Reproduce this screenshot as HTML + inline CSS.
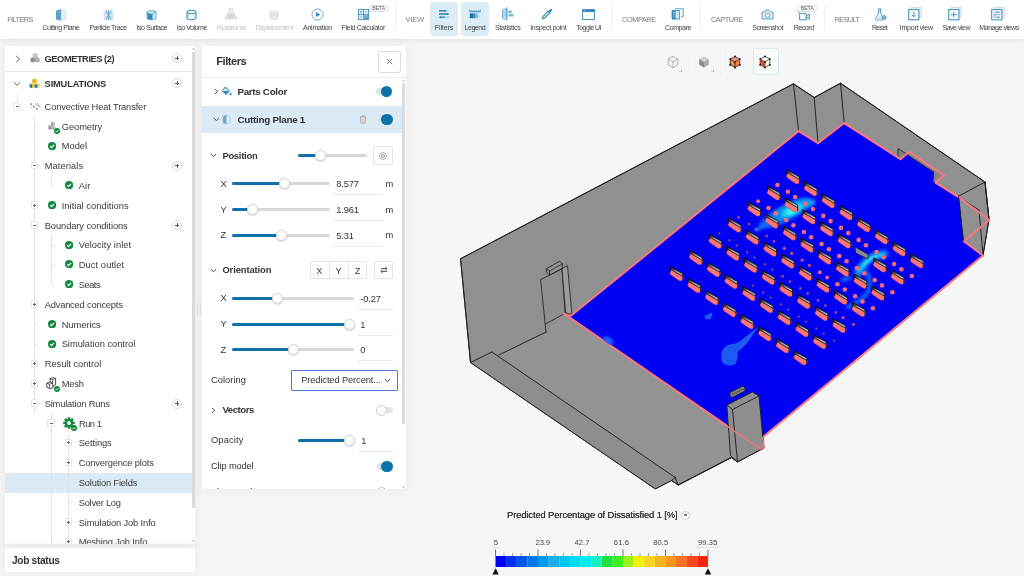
<!DOCTYPE html>
<html>
<head>
<meta charset="utf-8">
<title>SimScale</title>
<style>
*{box-sizing:border-box;margin:0;padding:0}
html,body{width:1024px;height:576px;overflow:hidden;background:#f6f6f6;font-family:"Liberation Sans",sans-serif;color:#3c3c3c}
.abs{position:absolute}
#toolbar{position:absolute;left:0;top:0;width:1024px;height:39.8px;background:#fff;border-bottom:1px solid #e8e8e8;box-shadow:0 1px 4px rgba(0,0,0,.06)}
#viewport{position:absolute;left:411px;top:39px;width:613px;height:537px}
#tree{position:absolute;left:5px;top:45.5px;width:186.5px;height:498.7px;background:#fff;overflow:hidden}
#treesh{position:absolute;left:5px;top:45.5px;width:190.3px;height:498.7px;background:#fff;box-shadow:0 0 11px 2px rgba(0,0,0,.045)}
#tsb{position:absolute;left:191.5px;top:45.5px;width:3.8px;height:498.7px;background:#fff}
#job{position:absolute;left:5px;top:548.2px;width:190.3px;height:23.8px;background:#fff;box-shadow:0 0 11px 2px rgba(0,0,0,.045)}
#filters{position:absolute;left:202px;top:45.5px;width:204.3px;height:443.2px;background:#fff;overflow:hidden}
#filsh{position:absolute;left:202px;top:45.5px;width:204.3px;height:443.2px;box-shadow:0 0 11px 2px rgba(0,0,0,.045)}
.t{position:absolute;white-space:nowrap;line-height:1;opacity:.999}
</style>
</head>
<body>
<div id="viewport">
<svg class="abs" style="left:-411px;top:-39px" width="1024" height="576" viewBox="0 0 1024 576">
<defs><filter id="bl" x="-50%" y="-50%" width="200%" height="200%"><feGaussianBlur stdDeviation="1.6"/></filter><filter id="bl3" x="-50%" y="-50%" width="200%" height="200%"><feGaussianBlur stdDeviation="0.5"/></filter><filter id="bl2" x="-50%" y="-50%" width="200%" height="200%"><feGaussianBlur stdDeviation="0.8"/></filter><linearGradient id="bg" x1="0" y1="0" x2="0.35" y2="1"><stop offset="0.15" stop-color="#1c1c1c"/><stop offset="0.55" stop-color="#9a9a9a"/><stop offset="1" stop-color="#b4b4b4"/></linearGradient><clipPath id="cp"><polygon points="564.0,313.6 567.5,316.8 571.5,315.3 798.5,131.1 818.0,143.2 844.2,123.0 900.5,159.2 906.5,154.3 933.5,172.0 933.5,181.0 935.5,182.5 958.5,197.0 963.6,241.2 983.0,255.5 762.6,437.3 763.7,447.4 761.0,449.2"/></clipPath></defs>
<polygon points="460.5,258.8 793.5,83.8 814.2,97.5 840.5,83.2 985.0,182.0 989.0,219.5 983.0,255.5 762.6,437.3 763.8,448.0 737.5,461.8 731.3,457.6 678.2,485.0 671.5,480.5 655.3,488.9 470.5,362.5" fill="#909090" stroke="#1a1a1a" stroke-width="0.9" stroke-linejoin="round"/>
<polygon points="498.8,355.0 546.2,332.0 564.0,314.0 763.8,448.0 737.5,461.8 731.3,457.6 678.2,485.0 675.2,477.5" fill="#939393"/>
<polygon points="470.5,362.5 492.0,352.0 675.2,477.5 671.5,480.5 655.3,488.9" fill="#8e8e8e"/>
<polygon points="460.5,258.8 793.5,83.8 814.2,97.5 840.5,83.2 985.0,182.0 989.0,219.5 983.0,255.5 762.6,437.3 763.8,448.0 737.5,461.8 731.3,457.6 678.2,485.0 671.5,480.5 655.3,488.9 470.5,362.5" fill="none" stroke="#1a1a1a" stroke-width="0.9" stroke-linejoin="round"/>
<line x1="470.5" y1="362.5" x2="492.0" y2="352.0" stroke="#1a1a1a" stroke-width="0.90" stroke-linecap="round"/>
<line x1="492.0" y1="352.0" x2="675.2" y2="477.5" stroke="#1a1a1a" stroke-width="0.90" stroke-linecap="round"/>
<line x1="675.2" y1="477.5" x2="678.2" y2="485.0" stroke="#1a1a1a" stroke-width="0.90" stroke-linecap="round"/>
<line x1="671.5" y1="480.5" x2="675.2" y2="477.5" stroke="#1a1a1a" stroke-width="0.90" stroke-linecap="round"/>
<line x1="498.8" y1="355.0" x2="546.2" y2="332.0" stroke="#1a1a1a" stroke-width="0.90" stroke-linecap="round"/>
<line x1="678.2" y1="485.0" x2="731.0" y2="457.5" stroke="#1a1a1a" stroke-width="0.90" stroke-linecap="round"/>
<line x1="793.5" y1="83.8" x2="798.5" y2="131.0" stroke="#1a1a1a" stroke-width="0.90" stroke-linecap="round"/>
<line x1="814.2" y1="97.5" x2="818.0" y2="143.0" stroke="#1a1a1a" stroke-width="0.90" stroke-linecap="round"/>
<line x1="840.5" y1="83.2" x2="844.2" y2="123.0" stroke="#1a1a1a" stroke-width="0.90" stroke-linecap="round"/>
<line x1="985.0" y1="182.0" x2="958.5" y2="196.2" stroke="#1a1a1a" stroke-width="0.90" stroke-linecap="round"/>
<line x1="958.5" y1="196.2" x2="963.0" y2="240.0" stroke="#1a1a1a" stroke-width="0.90" stroke-linecap="round"/>
<line x1="985.0" y1="182.0" x2="989.0" y2="219.5" stroke="#1a1a1a" stroke-width="0.90" stroke-linecap="round"/>
<line x1="979.0" y1="210.0" x2="983.0" y2="255.0" stroke="#1a1a1a" stroke-width="0.90" stroke-linecap="round"/>
<line x1="958.5" y1="197.0" x2="979.0" y2="210.0" stroke="#1a1a1a" stroke-width="0.90" stroke-linecap="round"/>
<polygon points="540.6,279.7 562.0,268.8 565.2,313.3 545.2,324.2" fill="#8e8e8e" stroke="#1a1a1a" stroke-width="0.8" stroke-linejoin="round"/>
<line x1="545.2" y1="324.2" x2="546.0" y2="332.0" stroke="#1a1a1a" stroke-width="0.80" stroke-linecap="round"/>
<polygon points="562.0,268.8 567.5,265.6 571.9,314.8 565.6,312.5" fill="#9c9c9c" stroke="#1a1a1a" stroke-width="0.8" stroke-linejoin="round"/>
<polygon points="546.4,268.8 559.7,261.2 562.3,264.0 562.3,268.3 549.5,275.0 546.4,271.9" fill="#949494" stroke="#1a1a1a" stroke-width="0.8" stroke-linejoin="round"/>
<line x1="549.5" y1="271.0" x2="562.3" y2="264.0" stroke="#1a1a1a" stroke-width="0.70" stroke-linecap="round"/>
<line x1="549.5" y1="271.0" x2="549.5" y2="275.0" stroke="#1a1a1a" stroke-width="0.70" stroke-linecap="round"/>
<line x1="546.4" y1="268.8" x2="549.5" y2="271.0" stroke="#1a1a1a" stroke-width="0.70" stroke-linecap="round"/>
<polygon points="898.0,148.5 933.0,171.0 933.0,182.0 898.0,158.0" fill="#7f7f7f" stroke="#1a1a1a" stroke-width="0.8" stroke-linejoin="round"/>
<polygon points="564.0,313.6 567.5,316.8 571.5,315.3 798.5,131.1 818.0,143.2 844.2,123.0 900.5,159.2 906.5,154.3 933.5,172.0 933.5,181.0 935.5,182.5 958.5,197.0 963.6,241.2 983.0,255.5 762.6,437.3 763.7,447.4 761.0,449.2" fill="#0000f5"/>
<polygon points="909.2,151.8 944.2,175.5 935.5,182.5 933.5,181.0 933.5,172.0 906.5,154.3" fill="#868686"/>
<line x1="906.5" y1="154.3" x2="933.5" y2="172.0" stroke="#1a1a1a" stroke-width="0.80" stroke-linecap="round"/>
<line x1="933.5" y1="172.0" x2="933.5" y2="179.0" stroke="#1a1a1a" stroke-width="0.80" stroke-linecap="round"/>
<polygon points="564.0,313.6 567.5,316.8 571.5,315.3 798.5,131.1 818.0,143.2 844.2,123.0 900.5,159.2 909.2,151.8 944.2,175.5 935.5,182.5 958.5,197.0 989.2,220.0 963.8,241.2 983.0,255.5 762.6,437.3 763.7,447.4 761.0,449.2" fill="none" stroke="#f8787e" stroke-width="2.1" stroke-linejoin="round"/>
<line x1="958.5" y1="196.2" x2="963.3" y2="240.5" stroke="#1a1a1a" stroke-width="0.90" stroke-linecap="round"/>
<g clip-path="url(#cp)">
<g filter="url(#bl)">



<ellipse cx="608" cy="341" rx="6" ry="4" fill="#2060ff" transform="rotate(30 608 341)"/>
</g><g filter="url(#bl3)">
<path d="M758.5 326.5L745 337Q739 342.5 734 344Q726.5 343 722.5 350Q719.5 357 723 363.5Q729 367.5 735.5 364Q738.5 357 737.5 352Q744 347.5 750.5 338.5Z" fill="#1a5af2"/>
<path d="M704 316.5L711.5 312.5L712.5 315L710 319.5L706 319Z" fill="#1a5af2"/>
</g><g filter="url(#bl)">
<ellipse cx="786" cy="213" rx="30" ry="8.5" fill="#0c58f2" transform="rotate(-27 786 213)"/>
<ellipse cx="791" cy="209.5" rx="21" ry="7" fill="#0e90f6" transform="rotate(-27 791 209.5)"/>
<ellipse cx="808" cy="204" rx="8" ry="3.5" fill="#10a0f8" transform="rotate(-20 808 204)"/>
<path d="M776 219Q764 226 756 230" stroke="#0e78f4" stroke-width="3.5" fill="none" stroke-linecap="round"/>
</g><g filter="url(#bl2)">
<ellipse cx="792.5" cy="210" rx="12" ry="5" fill="#18d0f4" transform="rotate(-27 792.5 210)"/>
<ellipse cx="793" cy="210" rx="7" ry="3" fill="#40f4ec" transform="rotate(-27 793 210)"/>
</g><g filter="url(#bl)">
<path d="M884 254Q870 256 864 264Q860 269 858 273" stroke="#0e70f4" stroke-width="9" fill="none" stroke-linecap="round"/>
<path d="M865 270Q873 281 868 292Q862 301 848 307" stroke="#0e60f2" stroke-width="4.5" fill="none" stroke-linecap="round"/>
<ellipse cx="846" cy="279" rx="6" ry="2.5" fill="#0e60f2" transform="rotate(-15 846 279)"/>
</g><g filter="url(#bl2)">
<path d="M883 254.5Q870 256.5 864.5 264Q861 268 859 271" stroke="#18c8f8" stroke-width="3.6" fill="none" stroke-linecap="round"/>
<path d="M876 256Q868 259 864 265" stroke="#48f0f0" stroke-width="1.6" fill="none" stroke-linecap="round"/>
</g>
<circle cx="777.5" cy="185.0" r="2.30" fill="#f26a72"/>
<circle cx="787.9" cy="191.8" r="2.30" fill="#f26a72"/>
<circle cx="795.2" cy="197.0" r="2.30" fill="#f26a72"/>
<circle cx="805.6" cy="203.8" r="2.30" fill="#f26a72"/>
<circle cx="812.9" cy="209.1" r="2.30" fill="#f26a72"/>
<circle cx="823.3" cy="215.9" r="2.30" fill="#f26a72"/>
<circle cx="830.6" cy="221.1" r="2.30" fill="#f26a72"/>
<circle cx="841.0" cy="227.9" r="2.30" fill="#f26a72"/>
<circle cx="848.3" cy="233.1" r="2.30" fill="#f26a72"/>
<circle cx="858.7" cy="239.9" r="2.30" fill="#f26a72"/>
<circle cx="866.0" cy="245.2" r="2.30" fill="#f26a72"/>
<circle cx="876.4" cy="252.0" r="2.30" fill="#f26a72"/>
<circle cx="883.7" cy="257.2" r="2.30" fill="#f26a72"/>
<circle cx="894.1" cy="264.0" r="2.30" fill="#f26a72"/>
<circle cx="901.4" cy="269.2" r="2.30" fill="#f26a72"/>
<circle cx="911.8" cy="276.0" r="2.30" fill="#f26a72"/>
<circle cx="758.1" cy="201.2" r="2.00" fill="#e0608a"/>
<circle cx="768.5" cy="208.0" r="2.30" fill="#f26a72"/>
<circle cx="775.8" cy="213.2" r="2.30" fill="#f26a72"/>
<circle cx="786.2" cy="220.0" r="2.30" fill="#f26a72"/>
<circle cx="793.5" cy="225.2" r="2.30" fill="#f26a72"/>
<circle cx="803.9" cy="232.0" r="2.30" fill="#f26a72"/>
<circle cx="811.2" cy="237.2" r="2.30" fill="#f26a72"/>
<circle cx="821.6" cy="244.0" r="2.30" fill="#f26a72"/>
<circle cx="828.9" cy="249.3" r="2.30" fill="#f26a72"/>
<circle cx="839.3" cy="256.1" r="2.30" fill="#f26a72"/>
<circle cx="846.6" cy="261.3" r="2.30" fill="#f26a72"/>
<circle cx="857.0" cy="268.1" r="2.30" fill="#f26a72"/>
<circle cx="864.3" cy="273.3" r="2.30" fill="#f26a72"/>
<circle cx="874.7" cy="280.1" r="2.30" fill="#f26a72"/>
<circle cx="882.0" cy="285.4" r="2.30" fill="#f26a72"/>
<circle cx="892.4" cy="292.2" r="2.30" fill="#f26a72"/>
<circle cx="738.6" cy="217.3" r="1.35" fill="#a04c84"/>
<circle cx="749.0" cy="224.1" r="1.35" fill="#a04c84"/>
<circle cx="756.3" cy="229.3" r="1.35" fill="#a04c84"/>
<circle cx="766.7" cy="236.1" r="1.35" fill="#a04c84"/>
<circle cx="774.0" cy="241.4" r="1.35" fill="#a04c84"/>
<circle cx="784.4" cy="248.2" r="1.60" fill="#c4507e"/>
<circle cx="791.7" cy="253.4" r="1.60" fill="#c4507e"/>
<circle cx="802.1" cy="260.2" r="1.60" fill="#c4507e"/>
<circle cx="809.4" cy="265.4" r="1.60" fill="#c4507e"/>
<circle cx="819.8" cy="272.2" r="2.00" fill="#e0608a"/>
<circle cx="827.1" cy="277.4" r="2.00" fill="#e0608a"/>
<circle cx="837.5" cy="284.2" r="2.30" fill="#f26a72"/>
<circle cx="844.8" cy="289.5" r="2.30" fill="#f26a72"/>
<circle cx="855.2" cy="296.3" r="2.30" fill="#f26a72"/>
<circle cx="862.5" cy="301.5" r="2.30" fill="#f26a72"/>
<circle cx="872.9" cy="308.3" r="2.30" fill="#f26a72"/>
<circle cx="719.2" cy="233.4" r="1.20" fill="#7a4478"/>
<circle cx="729.6" cy="240.2" r="1.20" fill="#7a4478"/>
<circle cx="736.9" cy="245.5" r="1.20" fill="#7a4478"/>
<circle cx="747.3" cy="252.3" r="1.20" fill="#7a4478"/>
<circle cx="754.6" cy="257.5" r="1.20" fill="#7a4478"/>
<circle cx="765.0" cy="264.3" r="1.20" fill="#7a4478"/>
<circle cx="772.3" cy="269.5" r="1.20" fill="#7a4478"/>
<circle cx="782.7" cy="276.3" r="1.35" fill="#a04c84"/>
<circle cx="790.0" cy="281.6" r="1.35" fill="#a04c84"/>
<circle cx="800.4" cy="288.4" r="1.35" fill="#a04c84"/>
<circle cx="807.7" cy="293.6" r="1.35" fill="#a04c84"/>
<circle cx="818.1" cy="300.4" r="1.35" fill="#a04c84"/>
<circle cx="825.4" cy="305.6" r="1.35" fill="#a04c84"/>
<circle cx="835.8" cy="312.4" r="1.35" fill="#a04c84"/>
<circle cx="843.1" cy="317.7" r="1.60" fill="#c4507e"/>
<circle cx="853.5" cy="324.5" r="1.60" fill="#c4507e"/>
<circle cx="699.8" cy="249.6" r="0.70" fill="#1c1488"/>
<circle cx="710.2" cy="256.4" r="0.70" fill="#1c1488"/>
<circle cx="717.5" cy="261.6" r="0.70" fill="#1c1488"/>
<circle cx="727.9" cy="268.4" r="0.70" fill="#1c1488"/>
<circle cx="735.2" cy="273.7" r="0.70" fill="#1c1488"/>
<circle cx="745.6" cy="280.5" r="0.70" fill="#1c1488"/>
<circle cx="752.9" cy="285.7" r="1.20" fill="#7a4478"/>
<circle cx="763.3" cy="292.5" r="1.20" fill="#7a4478"/>
<circle cx="770.6" cy="297.7" r="1.20" fill="#7a4478"/>
<circle cx="781.0" cy="304.5" r="1.20" fill="#7a4478"/>
<circle cx="788.3" cy="309.8" r="1.20" fill="#7a4478"/>
<circle cx="798.7" cy="316.6" r="1.20" fill="#7a4478"/>
<circle cx="806.0" cy="321.8" r="1.20" fill="#7a4478"/>
<circle cx="816.4" cy="328.6" r="1.20" fill="#7a4478"/>
<circle cx="823.7" cy="333.8" r="1.20" fill="#7a4478"/>
<circle cx="834.1" cy="340.6" r="1.20" fill="#7a4478"/>
<circle cx="680.4" cy="265.8" r="0.70" fill="#1c1488"/>
<circle cx="690.8" cy="272.6" r="0.70" fill="#1c1488"/>
<circle cx="698.1" cy="277.8" r="0.70" fill="#1c1488"/>
<circle cx="708.5" cy="284.6" r="0.70" fill="#1c1488"/>
<circle cx="715.8" cy="289.8" r="0.70" fill="#1c1488"/>
<circle cx="726.1" cy="296.6" r="0.70" fill="#1c1488"/>
<circle cx="733.5" cy="301.8" r="0.70" fill="#1c1488"/>
<circle cx="743.9" cy="308.6" r="0.70" fill="#1c1488"/>
<circle cx="751.1" cy="313.9" r="0.70" fill="#1c1488"/>
<circle cx="761.5" cy="320.7" r="0.70" fill="#1c1488"/>
<circle cx="768.9" cy="325.9" r="0.70" fill="#1c1488"/>
<circle cx="779.2" cy="332.7" r="0.70" fill="#1c1488"/>
<circle cx="786.6" cy="337.9" r="0.70" fill="#1c1488"/>
<circle cx="797.0" cy="344.7" r="0.70" fill="#1c1488"/>
<circle cx="804.2" cy="350.0" r="0.70" fill="#1c1488"/>
<circle cx="814.6" cy="356.8" r="0.70" fill="#1c1488"/>
<line x1="789.8" y1="175.7" x2="796.8" y2="180.6" stroke="#d8505c" stroke-width="6.7" stroke-linecap="round"/>
<line x1="789.8" y1="175.7" x2="796.8" y2="180.6" stroke="#f6767a" stroke-width="5.5" stroke-linecap="round"/>
<polygon points="786.7,169.5 799.4,176.8 799.4,179.5 786.7,172.2" fill="url(#bg)" stroke="#0a0a0a" stroke-width="0.8" stroke-linejoin="round"/>
<path d="M786.7 172.2v3.2M799.4 179.5v3.2" stroke="#0a0a0a" stroke-width="0.8" fill="none"/>
<line x1="807.5" y1="187.7" x2="814.5" y2="192.6" stroke="#d8505c" stroke-width="6.7" stroke-linecap="round"/>
<line x1="807.5" y1="187.7" x2="814.5" y2="192.6" stroke="#f6767a" stroke-width="5.5" stroke-linecap="round"/>
<polygon points="804.4,181.5 817.1,188.8 817.1,191.5 804.4,184.2" fill="url(#bg)" stroke="#0a0a0a" stroke-width="0.8" stroke-linejoin="round"/>
<path d="M804.4 184.2v3.2M817.1 191.5v3.2" stroke="#0a0a0a" stroke-width="0.8" fill="none"/>
<line x1="825.2" y1="199.8" x2="832.2" y2="204.7" stroke="#d8505c" stroke-width="6.7" stroke-linecap="round"/>
<line x1="825.2" y1="199.8" x2="832.2" y2="204.7" stroke="#f6767a" stroke-width="5.5" stroke-linecap="round"/>
<polygon points="822.1,193.6 834.8,200.9 834.8,203.6 822.1,196.3" fill="url(#bg)" stroke="#0a0a0a" stroke-width="0.8" stroke-linejoin="round"/>
<path d="M822.1 196.3v3.2M834.8 203.6v3.2" stroke="#0a0a0a" stroke-width="0.8" fill="none"/>
<line x1="842.9" y1="211.8" x2="849.9" y2="216.7" stroke="#d8505c" stroke-width="6.7" stroke-linecap="round"/>
<line x1="842.9" y1="211.8" x2="849.9" y2="216.7" stroke="#f6767a" stroke-width="5.5" stroke-linecap="round"/>
<polygon points="839.8,205.6 852.5,212.9 852.5,215.6 839.8,208.3" fill="url(#bg)" stroke="#0a0a0a" stroke-width="0.8" stroke-linejoin="round"/>
<path d="M839.8 208.3v3.2M852.5 215.6v3.2" stroke="#0a0a0a" stroke-width="0.8" fill="none"/>
<line x1="860.6" y1="223.8" x2="867.6" y2="228.7" stroke="#d8505c" stroke-width="6.7" stroke-linecap="round"/>
<line x1="860.6" y1="223.8" x2="867.6" y2="228.7" stroke="#f6767a" stroke-width="5.5" stroke-linecap="round"/>
<polygon points="857.5,217.6 870.2,224.9 870.2,227.6 857.5,220.3" fill="url(#bg)" stroke="#0a0a0a" stroke-width="0.8" stroke-linejoin="round"/>
<path d="M857.5 220.3v3.2M870.2 227.6v3.2" stroke="#0a0a0a" stroke-width="0.8" fill="none"/>
<line x1="878.3" y1="235.8" x2="885.3" y2="240.8" stroke="#d8505c" stroke-width="6.7" stroke-linecap="round"/>
<line x1="878.3" y1="235.8" x2="885.3" y2="240.8" stroke="#f6767a" stroke-width="5.5" stroke-linecap="round"/>
<polygon points="875.2,229.7 887.9,237.0 887.9,239.7 875.2,232.3" fill="url(#bg)" stroke="#0a0a0a" stroke-width="0.8" stroke-linejoin="round"/>
<path d="M875.2 232.3v3.2M887.9 239.7v3.2" stroke="#0a0a0a" stroke-width="0.8" fill="none"/>
<line x1="896.0" y1="247.9" x2="903.0" y2="252.8" stroke="#d8505c" stroke-width="6.7" stroke-linecap="round"/>
<line x1="896.0" y1="247.9" x2="903.0" y2="252.8" stroke="#f6767a" stroke-width="5.5" stroke-linecap="round"/>
<polygon points="892.9,241.7 905.6,249.0 905.6,251.7 892.9,244.4" fill="url(#bg)" stroke="#0a0a0a" stroke-width="0.8" stroke-linejoin="round"/>
<path d="M892.9 244.4v3.2M905.6 251.7v3.2" stroke="#0a0a0a" stroke-width="0.8" fill="none"/>
<line x1="913.7" y1="259.9" x2="920.7" y2="264.8" stroke="#d8505c" stroke-width="6.7" stroke-linecap="round"/>
<line x1="913.7" y1="259.9" x2="920.7" y2="264.8" stroke="#f6767a" stroke-width="5.5" stroke-linecap="round"/>
<polygon points="910.6,253.7 923.3,261.0 923.3,263.7 910.6,256.4" fill="url(#bg)" stroke="#0a0a0a" stroke-width="0.8" stroke-linejoin="round"/>
<path d="M910.6 256.4v3.2M923.3 263.7v3.2" stroke="#0a0a0a" stroke-width="0.8" fill="none"/>
<line x1="770.4" y1="191.8" x2="777.4" y2="196.8" stroke="#d8505c" stroke-width="6.7" stroke-linecap="round"/>
<line x1="770.4" y1="191.8" x2="777.4" y2="196.8" stroke="#f6767a" stroke-width="5.5" stroke-linecap="round"/>
<polygon points="767.3,185.7 780.0,193.0 780.0,195.7 767.3,188.3" fill="url(#bg)" stroke="#0a0a0a" stroke-width="0.8" stroke-linejoin="round"/>
<path d="M767.3 188.3v3.2M780.0 195.7v3.2" stroke="#0a0a0a" stroke-width="0.8" fill="none"/>
<line x1="788.1" y1="203.9" x2="795.1" y2="208.8" stroke="#d8505c" stroke-width="6.7" stroke-linecap="round"/>
<line x1="788.1" y1="203.9" x2="795.1" y2="208.8" stroke="#f6767a" stroke-width="5.5" stroke-linecap="round"/>
<polygon points="785.0,197.7 797.7,205.0 797.7,207.7 785.0,200.4" fill="url(#bg)" stroke="#0a0a0a" stroke-width="0.8" stroke-linejoin="round"/>
<path d="M785.0 200.4v3.2M797.7 207.7v3.2" stroke="#0a0a0a" stroke-width="0.8" fill="none"/>
<line x1="805.8" y1="215.9" x2="812.8" y2="220.8" stroke="#d8505c" stroke-width="6.7" stroke-linecap="round"/>
<line x1="805.8" y1="215.9" x2="812.8" y2="220.8" stroke="#f6767a" stroke-width="5.5" stroke-linecap="round"/>
<polygon points="802.7,209.7 815.4,217.0 815.4,219.7 802.7,212.4" fill="url(#bg)" stroke="#0a0a0a" stroke-width="0.8" stroke-linejoin="round"/>
<path d="M802.7 212.4v3.2M815.4 219.7v3.2" stroke="#0a0a0a" stroke-width="0.8" fill="none"/>
<line x1="823.5" y1="227.9" x2="830.5" y2="232.8" stroke="#d8505c" stroke-width="6.7" stroke-linecap="round"/>
<line x1="823.5" y1="227.9" x2="830.5" y2="232.8" stroke="#f6767a" stroke-width="5.5" stroke-linecap="round"/>
<polygon points="820.4,221.7 833.1,229.0 833.1,231.7 820.4,224.4" fill="url(#bg)" stroke="#0a0a0a" stroke-width="0.8" stroke-linejoin="round"/>
<path d="M820.4 224.4v3.2M833.1 231.7v3.2" stroke="#0a0a0a" stroke-width="0.8" fill="none"/>
<line x1="841.2" y1="240.0" x2="848.2" y2="244.9" stroke="#d8505c" stroke-width="6.7" stroke-linecap="round"/>
<line x1="841.2" y1="240.0" x2="848.2" y2="244.9" stroke="#f6767a" stroke-width="5.5" stroke-linecap="round"/>
<polygon points="838.1,233.8 850.8,241.1 850.8,243.8 838.1,236.5" fill="url(#bg)" stroke="#0a0a0a" stroke-width="0.8" stroke-linejoin="round"/>
<path d="M838.1 236.5v3.2M850.8 243.8v3.2" stroke="#0a0a0a" stroke-width="0.8" fill="none"/>
<polygon points="855.2,247.0 867.9,254.3 867.9,259.1 855.6,252.8" fill="#8a8a8a" stroke="#222" stroke-width="0.7" stroke-linejoin="round"/>
<line x1="876.6" y1="264.0" x2="883.6" y2="268.9" stroke="#d8505c" stroke-width="6.7" stroke-linecap="round"/>
<line x1="876.6" y1="264.0" x2="883.6" y2="268.9" stroke="#f6767a" stroke-width="5.5" stroke-linecap="round"/>
<polygon points="873.5,257.8 886.2,265.1 886.2,267.8 873.5,260.5" fill="url(#bg)" stroke="#0a0a0a" stroke-width="0.8" stroke-linejoin="round"/>
<path d="M873.5 260.5v3.2M886.2 267.8v3.2" stroke="#0a0a0a" stroke-width="0.8" fill="none"/>
<line x1="894.3" y1="276.1" x2="901.3" y2="281.0" stroke="#d8505c" stroke-width="6.7" stroke-linecap="round"/>
<line x1="894.3" y1="276.1" x2="901.3" y2="281.0" stroke="#f6767a" stroke-width="5.5" stroke-linecap="round"/>
<polygon points="891.2,269.9 903.9,277.2 903.9,279.9 891.2,272.6" fill="url(#bg)" stroke="#0a0a0a" stroke-width="0.8" stroke-linejoin="round"/>
<path d="M891.2 272.6v3.2M903.9 279.9v3.2" stroke="#0a0a0a" stroke-width="0.8" fill="none"/>
<line x1="750.9" y1="208.0" x2="757.9" y2="212.9" stroke="#d8505c" stroke-width="6.7" stroke-linecap="round"/>
<line x1="750.9" y1="208.0" x2="757.9" y2="212.9" stroke="#f6767a" stroke-width="5.5" stroke-linecap="round"/>
<polygon points="747.8,201.8 760.5,209.1 760.5,211.8 747.8,204.5" fill="url(#bg)" stroke="#0a0a0a" stroke-width="0.8" stroke-linejoin="round"/>
<path d="M747.8 204.5v3.2M760.5 211.8v3.2" stroke="#0a0a0a" stroke-width="0.8" fill="none"/>
<line x1="768.6" y1="220.0" x2="775.6" y2="224.9" stroke="#d8505c" stroke-width="6.7" stroke-linecap="round"/>
<line x1="768.6" y1="220.0" x2="775.6" y2="224.9" stroke="#f6767a" stroke-width="5.5" stroke-linecap="round"/>
<polygon points="765.5,213.8 778.2,221.1 778.2,223.8 765.5,216.5" fill="url(#bg)" stroke="#0a0a0a" stroke-width="0.8" stroke-linejoin="round"/>
<path d="M765.5 216.5v3.2M778.2 223.8v3.2" stroke="#0a0a0a" stroke-width="0.8" fill="none"/>
<line x1="786.3" y1="232.1" x2="793.3" y2="237.0" stroke="#d8505c" stroke-width="6.7" stroke-linecap="round"/>
<line x1="786.3" y1="232.1" x2="793.3" y2="237.0" stroke="#f6767a" stroke-width="5.5" stroke-linecap="round"/>
<polygon points="783.2,225.9 795.9,233.2 795.9,235.9 783.2,228.6" fill="url(#bg)" stroke="#0a0a0a" stroke-width="0.8" stroke-linejoin="round"/>
<path d="M783.2 228.6v3.2M795.9 235.9v3.2" stroke="#0a0a0a" stroke-width="0.8" fill="none"/>
<line x1="804.0" y1="244.1" x2="811.0" y2="249.0" stroke="#d8505c" stroke-width="6.7" stroke-linecap="round"/>
<line x1="804.0" y1="244.1" x2="811.0" y2="249.0" stroke="#f6767a" stroke-width="5.5" stroke-linecap="round"/>
<polygon points="800.9,237.9 813.6,245.2 813.6,247.9 800.9,240.6" fill="url(#bg)" stroke="#0a0a0a" stroke-width="0.8" stroke-linejoin="round"/>
<path d="M800.9 240.6v3.2M813.6 247.9v3.2" stroke="#0a0a0a" stroke-width="0.8" fill="none"/>
<line x1="821.7" y1="256.1" x2="828.7" y2="261.0" stroke="#d8505c" stroke-width="6.7" stroke-linecap="round"/>
<line x1="821.7" y1="256.1" x2="828.7" y2="261.0" stroke="#f6767a" stroke-width="5.5" stroke-linecap="round"/>
<polygon points="818.6,249.9 831.3,257.2 831.3,259.9 818.6,252.6" fill="url(#bg)" stroke="#0a0a0a" stroke-width="0.8" stroke-linejoin="round"/>
<path d="M818.6 252.6v3.2M831.3 259.9v3.2" stroke="#0a0a0a" stroke-width="0.8" fill="none"/>
<line x1="839.4" y1="268.1" x2="846.4" y2="273.1" stroke="#d8505c" stroke-width="6.7" stroke-linecap="round"/>
<line x1="839.4" y1="268.1" x2="846.4" y2="273.1" stroke="#f6767a" stroke-width="5.5" stroke-linecap="round"/>
<polygon points="836.3,261.9 849.0,269.2 849.0,271.9 836.3,264.6" fill="url(#bg)" stroke="#0a0a0a" stroke-width="0.8" stroke-linejoin="round"/>
<path d="M836.3 264.6v3.2M849.0 271.9v3.2" stroke="#0a0a0a" stroke-width="0.8" fill="none"/>
<line x1="857.1" y1="280.2" x2="864.1" y2="285.1" stroke="#d8505c" stroke-width="6.7" stroke-linecap="round"/>
<line x1="857.1" y1="280.2" x2="864.1" y2="285.1" stroke="#f6767a" stroke-width="5.5" stroke-linecap="round"/>
<polygon points="854.0,274.0 866.7,281.3 866.7,284.0 854.0,276.7" fill="url(#bg)" stroke="#0a0a0a" stroke-width="0.8" stroke-linejoin="round"/>
<path d="M854.0 276.7v3.2M866.7 284.0v3.2" stroke="#0a0a0a" stroke-width="0.8" fill="none"/>
<line x1="874.8" y1="292.2" x2="881.8" y2="297.1" stroke="#d8505c" stroke-width="6.7" stroke-linecap="round"/>
<line x1="874.8" y1="292.2" x2="881.8" y2="297.1" stroke="#f6767a" stroke-width="5.5" stroke-linecap="round"/>
<polygon points="871.7,286.0 884.4,293.3 884.4,296.0 871.7,288.7" fill="url(#bg)" stroke="#0a0a0a" stroke-width="0.8" stroke-linejoin="round"/>
<path d="M871.7 288.7v3.2M884.4 296.0v3.2" stroke="#0a0a0a" stroke-width="0.8" fill="none"/>
<line x1="731.5" y1="224.1" x2="738.5" y2="229.0" stroke="#d8505c" stroke-width="6.7" stroke-linecap="round"/>
<line x1="731.5" y1="224.1" x2="738.5" y2="229.0" stroke="#f6767a" stroke-width="5.5" stroke-linecap="round"/>
<polygon points="728.4,217.9 741.1,225.2 741.1,227.9 728.4,220.6" fill="url(#bg)" stroke="#0a0a0a" stroke-width="0.8" stroke-linejoin="round"/>
<path d="M728.4 220.6v3.2M741.1 227.9v3.2" stroke="#0a0a0a" stroke-width="0.8" fill="none"/>
<line x1="749.2" y1="236.2" x2="756.2" y2="241.1" stroke="#d8505c" stroke-width="6.7" stroke-linecap="round"/>
<line x1="749.2" y1="236.2" x2="756.2" y2="241.1" stroke="#f6767a" stroke-width="5.5" stroke-linecap="round"/>
<polygon points="746.1,230.0 758.8,237.3 758.8,240.0 746.1,232.7" fill="url(#bg)" stroke="#0a0a0a" stroke-width="0.8" stroke-linejoin="round"/>
<path d="M746.1 232.7v3.2M758.8 240.0v3.2" stroke="#0a0a0a" stroke-width="0.8" fill="none"/>
<line x1="766.9" y1="248.2" x2="773.9" y2="253.1" stroke="#d8505c" stroke-width="6.7" stroke-linecap="round"/>
<line x1="766.9" y1="248.2" x2="773.9" y2="253.1" stroke="#f6767a" stroke-width="5.5" stroke-linecap="round"/>
<polygon points="763.8,242.0 776.5,249.3 776.5,252.0 763.8,244.7" fill="url(#bg)" stroke="#0a0a0a" stroke-width="0.8" stroke-linejoin="round"/>
<path d="M763.8 244.7v3.2M776.5 252.0v3.2" stroke="#0a0a0a" stroke-width="0.8" fill="none"/>
<line x1="784.6" y1="260.2" x2="791.6" y2="265.1" stroke="#d8505c" stroke-width="6.7" stroke-linecap="round"/>
<line x1="784.6" y1="260.2" x2="791.6" y2="265.1" stroke="#f6767a" stroke-width="5.5" stroke-linecap="round"/>
<polygon points="781.5,254.0 794.2,261.3 794.2,264.0 781.5,256.7" fill="url(#bg)" stroke="#0a0a0a" stroke-width="0.8" stroke-linejoin="round"/>
<path d="M781.5 256.7v3.2M794.2 264.0v3.2" stroke="#0a0a0a" stroke-width="0.8" fill="none"/>
<line x1="802.3" y1="272.3" x2="809.3" y2="277.2" stroke="#d8505c" stroke-width="6.7" stroke-linecap="round"/>
<line x1="802.3" y1="272.3" x2="809.3" y2="277.2" stroke="#f6767a" stroke-width="5.5" stroke-linecap="round"/>
<polygon points="799.2,266.1 811.9,273.4 811.9,276.1 799.2,268.8" fill="url(#bg)" stroke="#0a0a0a" stroke-width="0.8" stroke-linejoin="round"/>
<path d="M799.2 268.8v3.2M811.9 276.1v3.2" stroke="#0a0a0a" stroke-width="0.8" fill="none"/>
<line x1="820.0" y1="284.3" x2="827.0" y2="289.2" stroke="#d8505c" stroke-width="6.7" stroke-linecap="round"/>
<line x1="820.0" y1="284.3" x2="827.0" y2="289.2" stroke="#f6767a" stroke-width="5.5" stroke-linecap="round"/>
<polygon points="816.9,278.1 829.6,285.4 829.6,288.1 816.9,280.8" fill="url(#bg)" stroke="#0a0a0a" stroke-width="0.8" stroke-linejoin="round"/>
<path d="M816.9 280.8v3.2M829.6 288.1v3.2" stroke="#0a0a0a" stroke-width="0.8" fill="none"/>
<line x1="837.7" y1="296.3" x2="844.7" y2="301.2" stroke="#d8505c" stroke-width="6.7" stroke-linecap="round"/>
<line x1="837.7" y1="296.3" x2="844.7" y2="301.2" stroke="#f6767a" stroke-width="5.5" stroke-linecap="round"/>
<polygon points="834.6,290.1 847.3,297.4 847.3,300.1 834.6,292.8" fill="url(#bg)" stroke="#0a0a0a" stroke-width="0.8" stroke-linejoin="round"/>
<path d="M834.6 292.8v3.2M847.3 300.1v3.2" stroke="#0a0a0a" stroke-width="0.8" fill="none"/>
<line x1="855.4" y1="308.4" x2="862.4" y2="313.3" stroke="#d8505c" stroke-width="6.7" stroke-linecap="round"/>
<line x1="855.4" y1="308.4" x2="862.4" y2="313.3" stroke="#f6767a" stroke-width="5.5" stroke-linecap="round"/>
<polygon points="852.3,302.2 865.0,309.5 865.0,312.2 852.3,304.9" fill="url(#bg)" stroke="#0a0a0a" stroke-width="0.8" stroke-linejoin="round"/>
<path d="M852.3 304.9v3.2M865.0 312.2v3.2" stroke="#0a0a0a" stroke-width="0.8" fill="none"/>
<line x1="712.1" y1="240.3" x2="719.1" y2="245.2" stroke="#d8505c" stroke-width="6.7" stroke-linecap="round"/>
<line x1="712.1" y1="240.3" x2="719.1" y2="245.2" stroke="#f6767a" stroke-width="5.5" stroke-linecap="round"/>
<polygon points="709.0,234.1 721.7,241.4 721.7,244.1 709.0,236.8" fill="url(#bg)" stroke="#0a0a0a" stroke-width="0.8" stroke-linejoin="round"/>
<path d="M709.0 236.8v3.2M721.7 244.1v3.2" stroke="#0a0a0a" stroke-width="0.8" fill="none"/>
<line x1="729.8" y1="252.3" x2="736.8" y2="257.2" stroke="#d8505c" stroke-width="6.7" stroke-linecap="round"/>
<line x1="729.8" y1="252.3" x2="736.8" y2="257.2" stroke="#f6767a" stroke-width="5.5" stroke-linecap="round"/>
<polygon points="726.7,246.1 739.4,253.4 739.4,256.1 726.7,248.8" fill="url(#bg)" stroke="#0a0a0a" stroke-width="0.8" stroke-linejoin="round"/>
<path d="M726.7 248.8v3.2M739.4 256.1v3.2" stroke="#0a0a0a" stroke-width="0.8" fill="none"/>
<line x1="747.5" y1="264.4" x2="754.5" y2="269.3" stroke="#d8505c" stroke-width="6.7" stroke-linecap="round"/>
<line x1="747.5" y1="264.4" x2="754.5" y2="269.3" stroke="#f6767a" stroke-width="5.5" stroke-linecap="round"/>
<polygon points="744.4,258.2 757.1,265.5 757.1,268.2 744.4,260.9" fill="url(#bg)" stroke="#0a0a0a" stroke-width="0.8" stroke-linejoin="round"/>
<path d="M744.4 260.9v3.2M757.1 268.2v3.2" stroke="#0a0a0a" stroke-width="0.8" fill="none"/>
<line x1="765.2" y1="276.4" x2="772.2" y2="281.3" stroke="#d8505c" stroke-width="6.7" stroke-linecap="round"/>
<line x1="765.2" y1="276.4" x2="772.2" y2="281.3" stroke="#f6767a" stroke-width="5.5" stroke-linecap="round"/>
<polygon points="762.1,270.2 774.8,277.5 774.8,280.2 762.1,272.9" fill="url(#bg)" stroke="#0a0a0a" stroke-width="0.8" stroke-linejoin="round"/>
<path d="M762.1 272.9v3.2M774.8 280.2v3.2" stroke="#0a0a0a" stroke-width="0.8" fill="none"/>
<line x1="782.9" y1="288.4" x2="789.9" y2="293.3" stroke="#d8505c" stroke-width="6.7" stroke-linecap="round"/>
<line x1="782.9" y1="288.4" x2="789.9" y2="293.3" stroke="#f6767a" stroke-width="5.5" stroke-linecap="round"/>
<polygon points="779.8,282.2 792.5,289.5 792.5,292.2 779.8,284.9" fill="url(#bg)" stroke="#0a0a0a" stroke-width="0.8" stroke-linejoin="round"/>
<path d="M779.8 284.9v3.2M792.5 292.2v3.2" stroke="#0a0a0a" stroke-width="0.8" fill="none"/>
<line x1="800.6" y1="300.4" x2="807.6" y2="305.4" stroke="#d8505c" stroke-width="6.7" stroke-linecap="round"/>
<line x1="800.6" y1="300.4" x2="807.6" y2="305.4" stroke="#f6767a" stroke-width="5.5" stroke-linecap="round"/>
<polygon points="797.5,294.2 810.2,301.6 810.2,304.2 797.5,296.9" fill="url(#bg)" stroke="#0a0a0a" stroke-width="0.8" stroke-linejoin="round"/>
<path d="M797.5 296.9v3.2M810.2 304.2v3.2" stroke="#0a0a0a" stroke-width="0.8" fill="none"/>
<line x1="818.3" y1="312.5" x2="825.3" y2="317.4" stroke="#d8505c" stroke-width="6.7" stroke-linecap="round"/>
<line x1="818.3" y1="312.5" x2="825.3" y2="317.4" stroke="#f6767a" stroke-width="5.5" stroke-linecap="round"/>
<polygon points="815.2,306.3 827.9,313.6 827.9,316.3 815.2,309.0" fill="url(#bg)" stroke="#0a0a0a" stroke-width="0.8" stroke-linejoin="round"/>
<path d="M815.2 309.0v3.2M827.9 316.3v3.2" stroke="#0a0a0a" stroke-width="0.8" fill="none"/>
<line x1="836.0" y1="324.5" x2="843.0" y2="329.4" stroke="#d8505c" stroke-width="6.7" stroke-linecap="round"/>
<line x1="836.0" y1="324.5" x2="843.0" y2="329.4" stroke="#f6767a" stroke-width="5.5" stroke-linecap="round"/>
<polygon points="832.9,318.3 845.6,325.6 845.6,328.3 832.9,321.0" fill="url(#bg)" stroke="#0a0a0a" stroke-width="0.8" stroke-linejoin="round"/>
<path d="M832.9 321.0v3.2M845.6 328.3v3.2" stroke="#0a0a0a" stroke-width="0.8" fill="none"/>
<line x1="692.6" y1="256.4" x2="699.6" y2="261.4" stroke="#d8505c" stroke-width="6.7" stroke-linecap="round"/>
<line x1="692.6" y1="256.4" x2="699.6" y2="261.4" stroke="#f6767a" stroke-width="5.5" stroke-linecap="round"/>
<polygon points="689.5,250.2 702.2,257.6 702.2,260.2 689.5,252.9" fill="url(#bg)" stroke="#0a0a0a" stroke-width="0.8" stroke-linejoin="round"/>
<path d="M689.5 252.9v3.2M702.2 260.2v3.2" stroke="#0a0a0a" stroke-width="0.8" fill="none"/>
<line x1="710.4" y1="268.5" x2="717.4" y2="273.4" stroke="#d8505c" stroke-width="6.7" stroke-linecap="round"/>
<line x1="710.4" y1="268.5" x2="717.4" y2="273.4" stroke="#f6767a" stroke-width="5.5" stroke-linecap="round"/>
<polygon points="707.2,262.3 720.0,269.6 720.0,272.3 707.2,265.0" fill="url(#bg)" stroke="#0a0a0a" stroke-width="0.8" stroke-linejoin="round"/>
<path d="M707.2 265.0v3.2M720.0 272.3v3.2" stroke="#0a0a0a" stroke-width="0.8" fill="none"/>
<line x1="728.0" y1="280.5" x2="735.0" y2="285.4" stroke="#d8505c" stroke-width="6.7" stroke-linecap="round"/>
<line x1="728.0" y1="280.5" x2="735.0" y2="285.4" stroke="#f6767a" stroke-width="5.5" stroke-linecap="round"/>
<polygon points="724.9,274.3 737.6,281.6 737.6,284.3 724.9,277.0" fill="url(#bg)" stroke="#0a0a0a" stroke-width="0.8" stroke-linejoin="round"/>
<path d="M724.9 277.0v3.2M737.6 284.3v3.2" stroke="#0a0a0a" stroke-width="0.8" fill="none"/>
<line x1="745.8" y1="292.5" x2="752.8" y2="297.4" stroke="#d8505c" stroke-width="6.7" stroke-linecap="round"/>
<line x1="745.8" y1="292.5" x2="752.8" y2="297.4" stroke="#f6767a" stroke-width="5.5" stroke-linecap="round"/>
<polygon points="742.6,286.3 755.4,293.6 755.4,296.3 742.6,289.0" fill="url(#bg)" stroke="#0a0a0a" stroke-width="0.8" stroke-linejoin="round"/>
<path d="M742.6 289.0v3.2M755.4 296.3v3.2" stroke="#0a0a0a" stroke-width="0.8" fill="none"/>
<line x1="763.4" y1="304.6" x2="770.4" y2="309.5" stroke="#d8505c" stroke-width="6.7" stroke-linecap="round"/>
<line x1="763.4" y1="304.6" x2="770.4" y2="309.5" stroke="#f6767a" stroke-width="5.5" stroke-linecap="round"/>
<polygon points="760.3,298.4 773.0,305.7 773.0,308.4 760.3,301.1" fill="url(#bg)" stroke="#0a0a0a" stroke-width="0.8" stroke-linejoin="round"/>
<path d="M760.3 301.1v3.2M773.0 308.4v3.2" stroke="#0a0a0a" stroke-width="0.8" fill="none"/>
<line x1="781.1" y1="316.6" x2="788.1" y2="321.5" stroke="#d8505c" stroke-width="6.7" stroke-linecap="round"/>
<line x1="781.1" y1="316.6" x2="788.1" y2="321.5" stroke="#f6767a" stroke-width="5.5" stroke-linecap="round"/>
<polygon points="778.0,310.4 790.8,317.7 790.8,320.4 778.0,313.1" fill="url(#bg)" stroke="#0a0a0a" stroke-width="0.8" stroke-linejoin="round"/>
<path d="M778.0 313.1v3.2M790.8 320.4v3.2" stroke="#0a0a0a" stroke-width="0.8" fill="none"/>
<line x1="798.9" y1="328.6" x2="805.9" y2="333.5" stroke="#d8505c" stroke-width="6.7" stroke-linecap="round"/>
<line x1="798.9" y1="328.6" x2="805.9" y2="333.5" stroke="#f6767a" stroke-width="5.5" stroke-linecap="round"/>
<polygon points="795.8,322.4 808.5,329.7 808.5,332.4 795.8,325.1" fill="url(#bg)" stroke="#0a0a0a" stroke-width="0.8" stroke-linejoin="round"/>
<path d="M795.8 325.1v3.2M808.5 332.4v3.2" stroke="#0a0a0a" stroke-width="0.8" fill="none"/>
<line x1="816.5" y1="340.7" x2="823.5" y2="345.6" stroke="#d8505c" stroke-width="6.7" stroke-linecap="round"/>
<line x1="816.5" y1="340.7" x2="823.5" y2="345.6" stroke="#f6767a" stroke-width="5.5" stroke-linecap="round"/>
<polygon points="813.4,334.5 826.1,341.8 826.1,344.5 813.4,337.2" fill="url(#bg)" stroke="#0a0a0a" stroke-width="0.8" stroke-linejoin="round"/>
<path d="M813.4 337.2v3.2M826.1 344.5v3.2" stroke="#0a0a0a" stroke-width="0.8" fill="none"/>
<line x1="673.2" y1="272.6" x2="680.2" y2="277.5" stroke="#d8505c" stroke-width="6.7" stroke-linecap="round"/>
<line x1="673.2" y1="272.6" x2="680.2" y2="277.5" stroke="#f6767a" stroke-width="5.5" stroke-linecap="round"/>
<polygon points="670.1,266.4 682.8,273.7 682.8,276.4 670.1,269.1" fill="url(#bg)" stroke="#0a0a0a" stroke-width="0.8" stroke-linejoin="round"/>
<path d="M670.1 269.1v3.2M682.8 276.4v3.2" stroke="#0a0a0a" stroke-width="0.8" fill="none"/>
<line x1="690.9" y1="284.6" x2="697.9" y2="289.5" stroke="#d8505c" stroke-width="6.7" stroke-linecap="round"/>
<line x1="690.9" y1="284.6" x2="697.9" y2="289.5" stroke="#f6767a" stroke-width="5.5" stroke-linecap="round"/>
<polygon points="687.8,278.4 700.5,285.7 700.5,288.4 687.8,281.1" fill="url(#bg)" stroke="#0a0a0a" stroke-width="0.8" stroke-linejoin="round"/>
<path d="M687.8 281.1v3.2M700.5 288.4v3.2" stroke="#0a0a0a" stroke-width="0.8" fill="none"/>
<line x1="708.6" y1="296.7" x2="715.6" y2="301.6" stroke="#d8505c" stroke-width="6.7" stroke-linecap="round"/>
<line x1="708.6" y1="296.7" x2="715.6" y2="301.6" stroke="#f6767a" stroke-width="5.5" stroke-linecap="round"/>
<polygon points="705.5,290.5 718.2,297.8 718.2,300.5 705.5,293.2" fill="url(#bg)" stroke="#0a0a0a" stroke-width="0.8" stroke-linejoin="round"/>
<path d="M705.5 293.2v3.2M718.2 300.5v3.2" stroke="#0a0a0a" stroke-width="0.8" fill="none"/>
<line x1="726.3" y1="308.7" x2="733.3" y2="313.6" stroke="#d8505c" stroke-width="6.7" stroke-linecap="round"/>
<line x1="726.3" y1="308.7" x2="733.3" y2="313.6" stroke="#f6767a" stroke-width="5.5" stroke-linecap="round"/>
<polygon points="723.2,302.5 735.9,309.8 735.9,312.5 723.2,305.2" fill="url(#bg)" stroke="#0a0a0a" stroke-width="0.8" stroke-linejoin="round"/>
<path d="M723.2 305.2v3.2M735.9 312.5v3.2" stroke="#0a0a0a" stroke-width="0.8" fill="none"/>
<line x1="744.0" y1="320.7" x2="751.0" y2="325.6" stroke="#d8505c" stroke-width="6.7" stroke-linecap="round"/>
<line x1="744.0" y1="320.7" x2="751.0" y2="325.6" stroke="#f6767a" stroke-width="5.5" stroke-linecap="round"/>
<polygon points="740.9,314.5 753.6,321.8 753.6,324.5 740.9,317.2" fill="url(#bg)" stroke="#0a0a0a" stroke-width="0.8" stroke-linejoin="round"/>
<path d="M740.9 317.2v3.2M753.6 324.5v3.2" stroke="#0a0a0a" stroke-width="0.8" fill="none"/>
<line x1="761.7" y1="332.8" x2="768.7" y2="337.7" stroke="#d8505c" stroke-width="6.7" stroke-linecap="round"/>
<line x1="761.7" y1="332.8" x2="768.7" y2="337.7" stroke="#f6767a" stroke-width="5.5" stroke-linecap="round"/>
<polygon points="758.6,326.6 771.3,333.9 771.3,336.6 758.6,329.2" fill="url(#bg)" stroke="#0a0a0a" stroke-width="0.8" stroke-linejoin="round"/>
<path d="M758.6 329.2v3.2M771.3 336.6v3.2" stroke="#0a0a0a" stroke-width="0.8" fill="none"/>
<line x1="779.4" y1="344.8" x2="786.4" y2="349.7" stroke="#d8505c" stroke-width="6.7" stroke-linecap="round"/>
<line x1="779.4" y1="344.8" x2="786.4" y2="349.7" stroke="#f6767a" stroke-width="5.5" stroke-linecap="round"/>
<polygon points="776.3,338.6 789.0,345.9 789.0,348.6 776.3,341.3" fill="url(#bg)" stroke="#0a0a0a" stroke-width="0.8" stroke-linejoin="round"/>
<path d="M776.3 341.3v3.2M789.0 348.6v3.2" stroke="#0a0a0a" stroke-width="0.8" fill="none"/>
<line x1="797.1" y1="356.8" x2="804.1" y2="361.7" stroke="#d8505c" stroke-width="6.7" stroke-linecap="round"/>
<line x1="797.1" y1="356.8" x2="804.1" y2="361.7" stroke="#f6767a" stroke-width="5.5" stroke-linecap="round"/>
<polygon points="794.0,350.6 806.7,357.9 806.7,360.6 794.0,353.3" fill="url(#bg)" stroke="#0a0a0a" stroke-width="0.8" stroke-linejoin="round"/>
<path d="M794.0 353.3v3.2M806.7 360.6v3.2" stroke="#0a0a0a" stroke-width="0.8" fill="none"/>
</g>
<polygon points="730.0,392.5 743.0,386.0 745.0,388.0 745.0,391.0 732.0,397.5 730.0,395.5" fill="#8a8a8a" stroke="#111" stroke-width="0.8" stroke-linejoin="round"/>
<line x1="732" y1="394.5" x2="744" y2="388.5" stroke="#333" stroke-width="1.6" stroke-dasharray="1 1"/>
<polygon points="726.8,405.0 752.5,392.0 759.0,396.0 763.8,448.0 737.5,461.8 730.5,455.5" fill="#8e8e8e" stroke="#1a1a1a" stroke-width="0.9" stroke-linejoin="round"/>
<line x1="726.8" y1="405.0" x2="732.5" y2="409.5" stroke="#1a1a1a" stroke-width="0.90" stroke-linecap="round"/>
<line x1="732.5" y1="409.5" x2="759.0" y2="396.0" stroke="#1a1a1a" stroke-width="0.90" stroke-linecap="round"/>
<line x1="732.5" y1="409.5" x2="737.5" y2="461.8" stroke="#1a1a1a" stroke-width="0.90" stroke-linecap="round"/>
<polyline points="727.5,426.5 760.6,448.9 763.6,447.6 763.4,441.0 762.2,438.6 763.6,436.4" fill="none" stroke="#f87078" stroke-width="1.4" stroke-linejoin="round"/>
</svg><div class="abs" style="left:341.5px;top:9.0px;width:26.4px;height:27px;border:0.8px solid #d6e8f3;border-radius:3px;background:#fafafa"></div>
<div class="abs" style="left:277.5px;top:9.5px;width:0.8px;height:26px;background:#efefef"></div>
<div class="abs" style="left:308.5px;top:9.5px;width:0.8px;height:26px;background:#efefef"></div>
<svg class="abs" style="left:255.00px;top:15.50px" width="14" height="14" viewBox="0 0 14 14"><path d="M7 1.4L11.8 4.1V9.7L7 12.6L2.2 9.7V4.1Z" fill="#fff" stroke="#777" stroke-width=".6"/><path d="M2.2 4.1L7 6.9L11.8 4.1M7 6.9V12.6" stroke="#777" stroke-width=".6" fill="none"/><path d="M7 1.4V6.6L2.2 9.7M7 6.6L11.8 9.7" stroke="#bbb" stroke-width=".4" fill="none"/></svg>
<svg class="abs" style="left:286.00px;top:15.50px" width="14" height="14" viewBox="0 0 14 14"><path d="M7 1.4L11.8 4.1L7 6.9L2.2 4.1Z" fill="#cfcfcf"/><path d="M2.2 4.1L7 6.9V12.6L2.2 9.7Z" fill="#8c8c8c"/><path d="M11.8 4.1L7 6.9V12.6L11.8 9.7Z" fill="#adadad"/></svg>
<svg class="abs" style="left:268.3px;top:29.5px" width="3" height="3" viewBox="0 0 3 3"><path d="M2.6 .4V2.6H.4" stroke="#999" stroke-width=".6" fill="none"/></svg>
<svg class="abs" style="left:299.5px;top:29.5px" width="3" height="3" viewBox="0 0 3 3"><path d="M2.6 .4V2.6H.4" stroke="#999" stroke-width=".6" fill="none"/></svg>
<svg class="abs" style="left:317.40px;top:15.50px" width="14" height="14" viewBox="0 0 14 14"><path d="M7 1.4L11.8 4.1L7 6.9L2.2 4.1Z" fill="#f4908c"/><path d="M2.2 4.1L7 6.9V12.6L2.2 9.7Z" fill="#f06a22"/><path d="M11.8 4.1L7 6.9V12.6L11.8 9.7Z" fill="#f2784a"/><path d="M7 1.4L11.8 4.1V9.7L7 12.6L2.2 9.7V4.1Z M2.2 4.1L7 6.9L11.8 4.1M7 6.9V12.6" fill="none" stroke="#222" stroke-width=".7"/><path d="M3.6 6.4L5.6 10.4M9 8.6l1.4-1" stroke="#ffd24a" stroke-width=".9"/><circle cx="7" cy="1.4" r=".95" fill="#111"/><circle cx="11.8" cy="4.1" r=".95" fill="#111"/><circle cx="11.8" cy="9.7" r=".95" fill="#111"/><circle cx="7" cy="12.6" r=".95" fill="#111"/><circle cx="2.2" cy="9.7" r=".95" fill="#111"/><circle cx="2.2" cy="4.1" r=".95" fill="#111"/><circle cx="7" cy="6.9" r=".95" fill="#111"/></svg>
<svg class="abs" style="left:347.40px;top:15.50px" width="14" height="14" viewBox="0 0 14 14"><path d="M7 1.4L11.8 4.1L7 6.9L2.2 4.1Z" fill="#fff"/><path d="M2.2 4.1L7 6.9V12.6L2.2 9.7Z" fill="#f06a22"/><path d="M11.8 4.1L7 6.9V12.6L11.8 9.7Z" fill="#fff"/><path d="M7 1.4L11.8 4.1V9.7L7 12.6L2.2 9.7V4.1Z M2.2 4.1L7 6.9L11.8 4.1M7 6.9V12.6" fill="none" stroke="#222" stroke-width=".7"/><path d="M3.4 5.6L5.8 10.6" stroke="#e03c10" stroke-width="1.2"/><circle cx="7" cy="1.4" r=".95" fill="#111"/><circle cx="11.8" cy="4.1" r=".95" fill="#111"/><circle cx="11.8" cy="9.7" r=".95" fill="#111"/><circle cx="7" cy="12.6" r=".95" fill="#111"/><circle cx="2.2" cy="9.7" r=".95" fill="#111"/><circle cx="2.2" cy="4.1" r=".95" fill="#111"/><circle cx="7" cy="6.9" r=".95" fill="#111"/></svg>
<div class="abs" style="left:270.3px;top:471.7px;width:9px;height:9px;border-radius:50%;background:#fff;border:0.7px solid #d2d2d2"></div>
<div class="abs" style="left:273.2px;top:474.8px;width:3.2px;height:2.6px;border-top:.7px solid #777;border-bottom:.7px solid #777"></div><div class="abs" style="left:273.2px;top:475.9px;width:3.2px;height:.7px;background:#777"></div>
<svg class="abs" style="left:74.0px;top:509.0px" width="230" height="30" viewBox="485 548 230 30"><rect x="495.50" y="556" width="10.68" height="11" fill="#0000f4"/><rect x="506.12" y="556" width="10.68" height="11" fill="#0030f2"/><rect x="516.75" y="556" width="10.68" height="11" fill="#0058ea"/><rect x="527.38" y="556" width="10.68" height="11" fill="#0078ea"/><rect x="538.00" y="556" width="10.68" height="11" fill="#0098f0"/><rect x="548.62" y="556" width="10.68" height="11" fill="#18aef0"/><rect x="559.25" y="556" width="10.68" height="11" fill="#00c6f8"/><rect x="569.88" y="556" width="10.68" height="11" fill="#00dcf8"/><rect x="580.50" y="556" width="10.68" height="11" fill="#00ecf0"/><rect x="591.12" y="556" width="10.68" height="11" fill="#18f0c0"/><rect x="601.75" y="556" width="10.68" height="11" fill="#20e040"/><rect x="612.38" y="556" width="10.68" height="11" fill="#3cf020"/><rect x="623.00" y="556" width="10.68" height="11" fill="#a0f020"/><rect x="633.62" y="556" width="10.68" height="11" fill="#f0f000"/><rect x="644.25" y="556" width="10.68" height="11" fill="#f8d420"/><rect x="654.88" y="556" width="10.68" height="11" fill="#f8b420"/><rect x="665.50" y="556" width="10.68" height="11" fill="#f89420"/><rect x="676.12" y="556" width="10.68" height="11" fill="#f87020"/><rect x="686.75" y="556" width="10.68" height="11" fill="#f84820"/><rect x="697.38" y="556" width="10.68" height="11" fill="#f82410"/><path d="M495.50 549.6V556" stroke="#555" stroke-width=".8"/><path d="M504.00 553V556" stroke="#777" stroke-width=".6"/><path d="M512.50 553V556" stroke="#777" stroke-width=".6"/><path d="M521.00 553V556" stroke="#777" stroke-width=".6"/><path d="M529.50 553V556" stroke="#777" stroke-width=".6"/><path d="M538.00 549.6V556" stroke="#555" stroke-width=".8"/><path d="M546.50 553V556" stroke="#777" stroke-width=".6"/><path d="M555.00 553V556" stroke="#777" stroke-width=".6"/><path d="M563.50 553V556" stroke="#777" stroke-width=".6"/><path d="M572.00 553V556" stroke="#777" stroke-width=".6"/><path d="M580.50 549.6V556" stroke="#555" stroke-width=".8"/><path d="M589.00 553V556" stroke="#777" stroke-width=".6"/><path d="M597.50 553V556" stroke="#777" stroke-width=".6"/><path d="M606.00 553V556" stroke="#777" stroke-width=".6"/><path d="M614.50 553V556" stroke="#777" stroke-width=".6"/><path d="M623.00 549.6V556" stroke="#555" stroke-width=".8"/><path d="M631.50 553V556" stroke="#777" stroke-width=".6"/><path d="M640.00 553V556" stroke="#777" stroke-width=".6"/><path d="M648.50 553V556" stroke="#777" stroke-width=".6"/><path d="M657.00 553V556" stroke="#777" stroke-width=".6"/><path d="M665.50 549.6V556" stroke="#555" stroke-width=".8"/><path d="M674.00 553V556" stroke="#777" stroke-width=".6"/><path d="M682.50 553V556" stroke="#777" stroke-width=".6"/><path d="M691.00 553V556" stroke="#777" stroke-width=".6"/><path d="M699.50 553V556" stroke="#777" stroke-width=".6"/><path d="M708.00 549.6V556" stroke="#555" stroke-width=".8"/><path d="M492.4 574.4L495.6 568.2L498.8 574.4Z" fill="#111"/><path d="M704.8 574.4L708 568.2L711.2 574.4Z" fill="#111"/></svg>
<div class="abs" style="left:81.5px;top:508.4px;width:7px;height:.6px;background:#e2e2e2"></div>
<div class="abs" style="left:285.0px;top:508.4px;width:24px;height:.6px;background:#e2e2e2"></div>
<span class="t" style="left:96.00px;top:471.28px;font-size:9.40px;letter-spacing:-0.109px;color:#333;text-shadow:0 0 .3px #333;">Predicted Percentage of Dissatisfied 1 [%]</span>
<span class="t" style="left:82.80px;top:500.48px;font-size:7.60px;letter-spacing:-0.534px;color:#444;">5</span>
<span class="t" style="left:124.50px;top:500.48px;font-size:7.60px;letter-spacing:-0.070px;color:#444;">23.9</span>
<span class="t" style="left:163.50px;top:500.48px;font-size:7.60px;letter-spacing:0.055px;color:#444;">42.7</span>
<span class="t" style="left:202.80px;top:500.48px;font-size:7.60px;letter-spacing:0.155px;color:#444;">61.6</span>
<span class="t" style="left:242.30px;top:500.48px;font-size:7.60px;letter-spacing:0.055px;color:#444;">80.5</span>
<span class="t" style="left:287.00px;top:500.48px;font-size:7.60px;letter-spacing:0.097px;color:#444;">99.35</span>
</div>
<div id="toolbar">
<div class="abs" style="left:430px;top:2px;width:28px;height:34px;background:#dcedf6;border-radius:3px"></div>
<div class="abs" style="left:461px;top:2px;width:28px;height:34px;background:#dcedf6;border-radius:3px"></div>
<div class="abs" style="left:394.5px;top:6px;width:1px;height:25px;background:#f0f0f0"></div>
<div class="abs" style="left:610.5px;top:6px;width:1px;height:25px;background:#f0f0f0"></div>
<div class="abs" style="left:700.0px;top:6px;width:1px;height:25px;background:#f0f0f0"></div>
<div class="abs" style="left:823.5px;top:6px;width:1px;height:25px;background:#f0f0f0"></div>
<div class="abs" style="left:368.8px;top:4.5px;width:20.2px;height:7.5px;background:#fff;border:0.6px solid #dcdcdc;border-radius:4px"></div>
<div class="abs" style="left:797.2px;top:4.5px;width:20.3px;height:7.5px;background:#fff;border:0.6px solid #dcdcdc;border-radius:4px"></div>
<svg class="abs" style="left:54.80px;top:7.50px" width="12" height="14" viewBox="0 0 12 14"><path d="M1 3.2C1 1.4 11 1.4 11 3.2V10.8C11 12.6 1 12.6 1 10.8Z" fill="#dcebf5" stroke="#c6deed" stroke-width=".5"/><path d="M1 3.2C1 1.7 6 1.8 6 1.8V12.2C6 12.2 1 12.4 1 10.8Z" fill="#5a9fc9"/><path d="M1.6 3.4C3 4.4 5 4.5 6 4.5" stroke="#9cc6e0" stroke-width=".6" fill="none"/><path d="M6 .2V13.8" stroke="#8fbfdc" stroke-width=".8" stroke-dasharray="1.2 .7"/><path d="M7 4.5h3M7 6.5h3M7 8.5h3" stroke="#fff" stroke-width=".5"/></svg>
<svg class="abs" style="left:102.50px;top:8.75px" width="11" height="12" viewBox="0 0 11 12"><rect x=".5" y=".8" width="10" height="10.6" rx="2" fill="#d6e8f3"/><path d="M3 1.5C4.5 4 6.5 8 8 10.8M8 1.5C6.5 4 4.5 8 3 10.8M5.5 2V10.5" stroke="#5a9fc9" stroke-width=".9" fill="none"/><path d="M2 4.2C4 5.2 7 5.2 9 4.2M2 8C4 7 7 7 9 8" stroke="#8fbfdc" stroke-width=".6" fill="none"/></svg>
<svg class="abs" style="left:146.25px;top:8.75px" width="11" height="12" viewBox="0 0 11 12"><path d="M1 3C1 1.3 10 1.3 10 3V9.5C10 11.2 1 11.2 1 9.5Z" fill="#cfe5f2" stroke="#3389ba" stroke-width=".7"/><path d="M1.6 3.5C3 5 4.5 5.5 6.5 5V10.4C4 10.8 1.6 10.4 1.6 9.4Z" fill="#3389ba"/><path d="M1 3C1 4.7 4 5.5 6.5 5C9 4.5 8 2 10 3" fill="none" stroke="#3389ba" stroke-width=".7"/></svg>
<svg class="abs" style="left:186.25px;top:8.75px" width="11" height="12" viewBox="0 0 11 12"><path d="M1 3C1 1.2 10 1.2 10 3V9.3C10 11.1 1 11.1 1 9.3Z" fill="#cfe5f2" stroke="#3389ba" stroke-width="1"/><ellipse cx="5.5" cy="3" rx="4.5" ry="1.6" fill="#fff" stroke="#3389ba" stroke-width="1"/><path d="M3 5.2V9.8C4.5 10.3 6.5 10.3 8 9.8V5.2C6.5 5.7 4.5 5.7 3 5.2Z" fill="#fff" opacity=".75"/></svg>
<svg class="abs" style="left:224.00px;top:7.00px" width="14" height="14" viewBox="0 0 14 14"><path d="M5 1.5h4v3.5l3.5 4.5v2.5H1.5V9.5L5 5Z" fill="#ececec" stroke="#cfcfcf" stroke-width=".6"/><ellipse cx="7" cy="9" rx="3.6" ry="1.8" fill="#d8d8d8" stroke="#cfcfcf" stroke-width=".6"/></svg>
<svg class="abs" style="left:268.20px;top:8.80px" width="12" height="12" viewBox="0 0 12 12"><path d="M2 3.2C2.5 1.6 10.5 2.6 10.7 4.2L9.6 9.6C9 11.2 2.5 10.6 2.3 9Z" fill="#e6e6e6" stroke="#cfcfcf" stroke-width=".6"/><ellipse cx="6.4" cy="3.5" rx="4.3" ry="1.4" transform="rotate(8 6.4 3.5)" fill="#f0f0f0" stroke="#cfcfcf" stroke-width=".5"/></svg>
<svg class="abs" style="left:311.00px;top:7.50px" width="13" height="13" viewBox="0 0 13 13"><circle cx="6.5" cy="6.5" r="5.5" fill="#fff" stroke="#3389ba" stroke-width=".7"/><path d="M5 3.9L9.2 6.5L5 9.1Z" fill="#3389ba"/></svg>
<svg class="abs" style="left:357.80px;top:8.50px" width="11" height="11" viewBox="0 0 11 11"><rect x=".4" y=".4" width="10.2" height="10.2" fill="#e6f2f9" stroke="#3389ba" stroke-width=".8"/><path d="M5.5 .4V10.6M.4 5.5H10.6" stroke="#3389ba" stroke-width=".8"/><rect x="6.4" y="6.4" width="3.8" height="3.8" fill="#3389ba"/><path d="M2 2.9h2M3 1.9v2M7 2.9h2.2M2 8h2M7.2 7.6h2.4M7.2 8.8h2.4" stroke="#3389ba" stroke-width=".6"/><path d="M7.2 7.6h2.4M7.2 8.8h2.4" stroke="#fff" stroke-width=".5"/></svg>
<svg class="abs" style="left:437.75px;top:9.00px" width="12" height="10" viewBox="0 0 12 10"><path d="M1 1.8h10M1 5h10M1 8.2h10" stroke="#8dbedb" stroke-width=".9"/><path d="M1 1.8h6M1 5h9" stroke="#3389ba" stroke-width="1.4"/><circle cx="7.2" cy="1.8" r="1.1" fill="#3389ba"/><circle cx="9.6" cy="5" r="1.1" fill="#3389ba"/><path d="M3.2 6.7L1 8.2L3.2 9.7Z" fill="#3389ba"/><path d="M2 8.2h5" stroke="#3389ba" stroke-width="1.3"/></svg>
<svg class="abs" style="left:469.00px;top:9.00px" width="12" height="10" viewBox="0 0 12 10"><path d="M.8 .6v2.2h10.4V.6M2.9 1.2v1.6M5 1.2v1.6M7.1 1.2v1.6M9.2 1.2v1.6" stroke="#3389ba" stroke-width=".9" fill="none"/><rect x=".8" y="4.4" width="3.4" height="4.8" fill="#1f6f9f"/><rect x="4.2" y="4.4" width="2.4" height="4.8" fill="#3389ba"/><rect x="6.6" y="4.4" width="2.2" height="4.8" fill="#7fb6d6"/><rect x="8.8" y="4.4" width="2.4" height="4.8" fill="#c4dfee"/></svg>
<svg class="abs" style="left:501.00px;top:7.00px" width="13" height="14" viewBox="0 0 13 14"><path d="M1.5 3.5C1.5 2 5.5 1.8 5.5 1.8V12.3C5.5 12.3 1.5 12.2 1.5 10.6Z" fill="#cfe5f2" stroke="#3389ba" stroke-width=".7"/><path d="M6.3 .3V13.7" stroke="#3389ba" stroke-width=".8" stroke-dasharray="1 .6"/><path d="M7.5 3.6h3.2v2.4H7.5zM7.5 7h5v2.4H7.5z" fill="#7fb6d6"/><path d="M2.3 5h2.5M2.3 7h2.5M2.3 9h2.5" stroke="#3389ba" stroke-width=".5"/></svg>
<svg class="abs" style="left:541.30px;top:7.70px" width="12" height="12" viewBox="0 0 12 12"><path d="M7.2 3.2L8.8 4.8L3.6 10L1.4 10.8L2.1 8.4Z" fill="#fff" stroke="#3389ba" stroke-width="1.1" stroke-linejoin="round"/><path d="M6.3 2.5L9.5 5.7M7.6 3.8L9.3 1.6C10.2.8 11.4 2 10.5 2.8L8.3 4.6Z" fill="#3389ba" stroke="#3389ba" stroke-width=".9" stroke-linejoin="round"/></svg>
<svg class="abs" style="left:581.90px;top:8.50px" width="13" height="11" viewBox="0 0 13 11"><rect x=".6" y=".6" width="11.8" height="9.8" fill="#fff" stroke="#3389ba" stroke-width=".9"/><rect x=".6" y=".6" width="11.8" height="2.4" fill="#3389ba"/><path d="M2 1.8h1.5" stroke="#fff" stroke-width=".6"/></svg>
<svg class="abs" style="left:671.30px;top:8.00px" width="13" height="12" viewBox="0 0 13 12"><path d="M4 .8h8.2v8H10" fill="#fff" stroke="#3389ba" stroke-width=".8"/><path d="M1 2.5h7.6v8.6H1z" fill="#cfe5f2" stroke="#3389ba" stroke-width=".8"/><path d="M1 2.5h3.6v8.6H1z" fill="#3389ba"/><path d="M2 4.5h2M2 6.3h2M2 8.1h2" stroke="#fff" stroke-width=".5"/></svg>
<svg class="abs" style="left:761.20px;top:8.90px" width="13" height="11" viewBox="0 0 13 11"><path d="M1 3h2.6L4.6 1.2h3.8L9.4 3H12v7H1Z" fill="#e6f2f9" stroke="#3389ba" stroke-width=".8" stroke-linejoin="round"/><circle cx="6.5" cy="6.3" r="2.3" fill="#fff" stroke="#3389ba" stroke-width=".8"/></svg>
<svg class="abs" style="left:797.00px;top:10.60px" width="14" height="10" viewBox="0 0 14 10"><path d="M2.6 2.4h6.6v6.4H2.6z" fill="#fff" stroke="#3389ba" stroke-width=".9" stroke-linejoin="round"/><path d="M9.2 4.6L12.4 3v5.2L9.2 6.6Z" fill="#cfe5f2" stroke="#3389ba" stroke-width=".8" stroke-linejoin="round"/><path d="M.6 .6L2.8 2.6" stroke="#3389ba" stroke-width=".9"/></svg>
<svg class="abs" style="left:873.75px;top:8.10px" width="13" height="13" viewBox="0 0 13 13"><path d="M4 1h3.4M4.7 1v4L1.6 10.6C1.3 11.4 1.8 12 2.6 12h6.2C9.6 12 10.1 11.4 9.8 10.6L6.7 5V1" fill="#fff" stroke="#3389ba" stroke-width=".9" stroke-linejoin="round"/><path d="M3.1 8.4h5.2l1.3 2.4c.2.6-.1 1-.8 1H2.6c-.7 0-1-.4-.8-1Z" fill="#cfe5f2"/><circle cx="10" cy="9.6" r="2.6" fill="#3389ba" stroke="#fff" stroke-width=".5"/><path d="M8.8 9.6a1.2 1.2 0 1 1 .5 1" stroke="#fff" stroke-width=".6" fill="none"/></svg>
<svg class="abs" style="left:908.40px;top:7.00px" width="14" height="14" viewBox="0 0 14 14"><rect x="3.6" y=".6" width="9.6" height="9.6" fill="#e6f2f9" stroke="#a9cfe4" stroke-width=".6"/><rect x=".7" y="2.6" width="10.2" height="10.2" fill="#fff" stroke="#3389ba" stroke-width="1"/><path d="M5.8 4.6v5M3.9 7.8L5.8 9.8L7.7 7.8M3.6 5h0" stroke="#3389ba" stroke-width=".9" fill="none"/></svg>
<svg class="abs" style="left:948.40px;top:7.00px" width="14" height="14" viewBox="0 0 14 14"><rect x="3.6" y=".6" width="9.6" height="9.6" fill="#e6f2f9" stroke="#a9cfe4" stroke-width=".6"/><rect x=".7" y="2.6" width="10.2" height="10.2" fill="#fff" stroke="#3389ba" stroke-width="1"/><path d="M5.8 4.8v5.8M2.9 7.7h5.8" stroke="#3389ba" stroke-width=".9" fill="none"/></svg>
<svg class="abs" style="left:991.40px;top:7.00px" width="14" height="14" viewBox="0 0 14 14"><rect x="3.6" y=".6" width="9.6" height="9.6" fill="#e6f2f9" stroke="#a9cfe4" stroke-width=".6"/><rect x=".7" y="2.6" width="10.2" height="10.2" fill="#fff" stroke="#3389ba" stroke-width="1"/><path d="M2.4 5.2h6.8M2.4 7.7h6.8M2.4 10.2h6.8" stroke="#3389ba" stroke-width=".7"/><path d="M6.6 4.4v1.6M4 6.9v1.6M7.2 9.4v1.6" stroke="#3389ba" stroke-width="1.1"/></svg>
<span class="t" style="left:7.20px;top:16.17px;font-size:7.40px;letter-spacing:-0.606px;color:#7a7a7a;">FILTERS</span>
<span class="t" style="left:405.60px;top:16.17px;font-size:7.40px;letter-spacing:-0.073px;color:#7a7a7a;">VIEW</span>
<span class="t" style="left:622.00px;top:16.17px;font-size:7.40px;letter-spacing:-0.447px;color:#7a7a7a;">COMPARE</span>
<span class="t" style="left:711.00px;top:16.17px;font-size:7.40px;letter-spacing:-0.475px;color:#7a7a7a;">CAPTURE</span>
<span class="t" style="left:834.70px;top:16.17px;font-size:7.40px;letter-spacing:-0.685px;color:#7a7a7a;">RESULT</span>
<span class="t" style="left:42.25px;top:25.03px;font-size:7.10px;letter-spacing:-0.419px;color:#444;">Cutting Plane</span>
<span class="t" style="left:89.40px;top:25.03px;font-size:7.10px;letter-spacing:-0.420px;color:#444;">Particle Trace</span>
<span class="t" style="left:136.50px;top:25.03px;font-size:7.10px;letter-spacing:-0.490px;color:#444;">Iso Surface</span>
<span class="t" style="left:176.75px;top:25.03px;font-size:7.10px;letter-spacing:-0.486px;color:#444;">Iso Volume</span>
<span class="t" style="left:217.00px;top:25.03px;font-size:7.10px;letter-spacing:-0.345px;color:#c4c4c4;">Rotational</span>
<span class="t" style="left:255.50px;top:25.03px;font-size:7.10px;letter-spacing:-0.457px;color:#c4c4c4;">Displacement</span>
<span class="t" style="left:303.00px;top:25.03px;font-size:7.10px;letter-spacing:-0.283px;color:#444;">Animation</span>
<span class="t" style="left:341.70px;top:25.03px;font-size:7.10px;letter-spacing:-0.375px;color:#444;">Field Calculator</span>
<span class="t" style="left:434.80px;top:25.03px;font-size:7.10px;letter-spacing:-0.145px;color:#444;">Filters</span>
<span class="t" style="left:464.50px;top:25.03px;font-size:7.10px;letter-spacing:-0.495px;color:#444;">Legend</span>
<span class="t" style="left:495.00px;top:25.03px;font-size:7.10px;letter-spacing:-0.289px;color:#444;">Statistics</span>
<span class="t" style="left:530.20px;top:25.03px;font-size:7.10px;letter-spacing:-0.318px;color:#444;">Inspect point</span>
<span class="t" style="left:576.25px;top:25.03px;font-size:7.10px;letter-spacing:-0.580px;color:#444;">Toggle UI</span>
<span class="t" style="left:665.00px;top:25.03px;font-size:7.10px;letter-spacing:-0.455px;color:#444;">Compare</span>
<span class="t" style="left:752.30px;top:25.03px;font-size:7.10px;letter-spacing:-0.519px;color:#444;">Screenshot</span>
<span class="t" style="left:793.75px;top:25.03px;font-size:7.10px;letter-spacing:-0.504px;color:#444;">Record</span>
<span class="t" style="left:871.90px;top:25.03px;font-size:7.10px;letter-spacing:-0.686px;color:#444;">Reset</span>
<span class="t" style="left:899.80px;top:25.03px;font-size:7.10px;letter-spacing:-0.297px;color:#444;">Import view</span>
<span class="t" style="left:942.50px;top:25.03px;font-size:7.10px;letter-spacing:-0.538px;color:#444;">Save view</span>
<span class="t" style="left:979.30px;top:25.03px;font-size:7.10px;letter-spacing:-0.497px;color:#444;">Manage views</span>
<span class="t" style="left:372.35px;top:6.27px;font-size:5.20px;letter-spacing:-0.080px;color:#555;">BETA</span>
<span class="t" style="left:800.80px;top:6.27px;font-size:5.20px;letter-spacing:-0.068px;color:#555;">BETA</span>
</div>
<div id="treesh"></div><div id="filsh"></div>
<div id="tree">
<div class="abs" style="left:0;top:427.6px;width:186.5px;height:19.8px;background:#dbeaf4"></div>
<div class="abs" style="left:0;top:25.1px;width:186.5px;height:1px;background:#e6e6e6"></div>
<div class="abs" style="left:11.7px;top:48.5px;width:1px;height:9.0px;background:#e2e2e2"></div>
<div class="abs" style="left:28.8px;top:71.5px;width:1px;height:295.0px;background:#e2e2e2"></div>
<div class="abs" style="left:46.1px;top:130.5px;width:1px;height:10.0px;background:#e2e2e2"></div>
<div class="abs" style="left:46.6px;top:140.0px;width:3.4px;height:1px;background:#e2e2e2"></div>
<div class="abs" style="left:46.1px;top:190.5px;width:1px;height:49.0px;background:#e2e2e2"></div>
<div class="abs" style="left:46.1px;top:367.5px;width:1px;height:132.0px;background:#e2e2e2"></div>
<div class="abs" style="left:62.9px;top:388.5px;width:1px;height:111.0px;background:#e2e2e2"></div>
<div class="abs" style="left:29.3px;top:80.6px;width:3.2px;height:1px;background:#e2e2e2"></div>
<div class="abs" style="left:29.3px;top:100.4px;width:3.2px;height:1px;background:#e2e2e2"></div>
<div class="abs" style="left:29.3px;top:278.6px;width:3.2px;height:1px;background:#e2e2e2"></div>
<div class="abs" style="left:29.3px;top:298.4px;width:3.2px;height:1px;background:#e2e2e2"></div>
<div class="abs" style="left:46.6px;top:199.4px;width:3.2px;height:1px;background:#e2e2e2"></div>
<div class="abs" style="left:46.6px;top:219.2px;width:3.2px;height:1px;background:#e2e2e2"></div>
<div class="abs" style="left:46.6px;top:239.0px;width:3.2px;height:1px;background:#e2e2e2"></div>
<div class="abs" style="left:63.4px;top:437.0px;width:3.2px;height:1px;background:#e2e2e2"></div>
<div class="abs" style="left:63.4px;top:456.8px;width:3.2px;height:1px;background:#e2e2e2"></div>
<div class="abs" style="left:8.4px;top:56.8px;width:7.6px;height:7.8px;border:0.8px solid #e6e6e6;background:#fff;border-radius:1px"></div>
<div class="abs" style="left:10.7px;top:60.2px;width:3px;height:1px;background:#666"></div>
<svg class="abs" style="left:23.80px;top:56.00px" width="12" height="9" viewBox="0 0 12 9"><path d="M1 2.2h2.4M2.2 1v2.4M3.6 4.6h2.6M4.9 3.4v2.4M6.2 1.4l1.6 2.2M8 .8l1.8 2.6M9.4 3l1.8 2.6M6.6 6.8h2.4M7.8 5.6v2.4M1.8 5.2l1 .9" stroke="#8a8a8a" stroke-width=".8" fill="none"/></svg>
<svg class="abs" style="left:42.50px;top:75.90px" width="9" height="10" viewBox="0 0 9 10"><path d="M3.2 1.2L5 .4L7 1.2V6L5 6.8L3.2 6Z" fill="#c4c4c4"/><path d="M3.2 1.2L5 2V6.8L3.2 6Z" fill="#9a9a9a"/><path d="M.6 4.8L2.4 4L4.2 4.8V8L2.4 8.8L.6 8Z" fill="#b4b4b4"/><path d="M.6 4.8L2.4 5.6V8.8L.6 8Z" fill="#8a8a8a"/><path d="M4.2 5.6L6 4.8L7.8 5.6V8L6 8.8L4.2 8Z" fill="#cfcfcf"/><path d="M4.2 5.6L6 6.4V8.8L4.2 8Z" fill="#a4a4a4"/></svg>
<svg class="abs" style="left:48.80px;top:82.60px" width="6" height="6" viewBox="0 0 10 10"><circle cx="5" cy="5" r="5" fill="#128a3c"/><path d="M2.6 5.1L4.3 6.8L7.4 3.5" stroke="#fff" stroke-width="1.5" fill="none"/></svg>
<svg class="abs" style="left:42.50px;top:96.10px" width="8.2" height="8.2" viewBox="0 0 10 10"><circle cx="5" cy="5" r="5" fill="#128a3c"/><path d="M2.6 5.1L4.3 6.8L7.4 3.5" stroke="#fff" stroke-width="1.5" fill="none"/></svg>
<div class="abs" style="left:25.5px;top:116.2px;width:7.6px;height:7.8px;border:0.8px solid #e6e6e6;background:#fff;border-radius:1px"></div>
<div class="abs" style="left:27.8px;top:119.6px;width:3px;height:1px;background:#666"></div>
<div class="abs" style="left:167.0px;top:115.4px;width:10px;height:10px;border:0.8px solid #dadada;border-radius:50%;background:#fff"></div>
<div class="abs" style="left:169.9px;top:119.9px;width:4.2px;height:1px;background:#555"></div>
<div class="abs" style="left:171.5px;top:118.3px;width:1px;height:4.2px;background:#555"></div>
<svg class="abs" style="left:59.50px;top:135.70px" width="8.2" height="8.2" viewBox="0 0 10 10"><circle cx="5" cy="5" r="5" fill="#128a3c"/><path d="M2.6 5.1L4.3 6.8L7.4 3.5" stroke="#fff" stroke-width="1.5" fill="none"/></svg>
<div class="abs" style="left:25.5px;top:155.8px;width:7.6px;height:7.8px;border:0.8px solid #e6e6e6;background:#fff;border-radius:1px"></div>
<div class="abs" style="left:27.8px;top:159.2px;width:3px;height:1px;background:#666"></div>
<div class="abs" style="left:28.8px;top:158.2px;width:1px;height:3px;background:#666"></div>
<svg class="abs" style="left:42.50px;top:155.50px" width="8.2" height="8.2" viewBox="0 0 10 10"><circle cx="5" cy="5" r="5" fill="#128a3c"/><path d="M2.6 5.1L4.3 6.8L7.4 3.5" stroke="#fff" stroke-width="1.5" fill="none"/></svg>
<div class="abs" style="left:25.5px;top:175.6px;width:7.6px;height:7.8px;border:0.8px solid #e6e6e6;background:#fff;border-radius:1px"></div>
<div class="abs" style="left:27.8px;top:179.0px;width:3px;height:1px;background:#666"></div>
<div class="abs" style="left:167.0px;top:174.8px;width:10px;height:10px;border:0.8px solid #dadada;border-radius:50%;background:#fff"></div>
<div class="abs" style="left:169.9px;top:179.3px;width:4.2px;height:1px;background:#555"></div>
<div class="abs" style="left:171.5px;top:177.7px;width:1px;height:4.2px;background:#555"></div>
<svg class="abs" style="left:59.50px;top:195.10px" width="8.2" height="8.2" viewBox="0 0 10 10"><circle cx="5" cy="5" r="5" fill="#128a3c"/><path d="M2.6 5.1L4.3 6.8L7.4 3.5" stroke="#fff" stroke-width="1.5" fill="none"/></svg>
<svg class="abs" style="left:59.50px;top:214.90px" width="8.2" height="8.2" viewBox="0 0 10 10"><circle cx="5" cy="5" r="5" fill="#128a3c"/><path d="M2.6 5.1L4.3 6.8L7.4 3.5" stroke="#fff" stroke-width="1.5" fill="none"/></svg>
<svg class="abs" style="left:59.50px;top:234.70px" width="8.2" height="8.2" viewBox="0 0 10 10"><circle cx="5" cy="5" r="5" fill="#128a3c"/><path d="M2.6 5.1L4.3 6.8L7.4 3.5" stroke="#fff" stroke-width="1.5" fill="none"/></svg>
<div class="abs" style="left:25.5px;top:254.8px;width:7.6px;height:7.8px;border:0.8px solid #e6e6e6;background:#fff;border-radius:1px"></div>
<div class="abs" style="left:27.8px;top:258.2px;width:3px;height:1px;background:#666"></div>
<div class="abs" style="left:28.8px;top:257.2px;width:1px;height:3px;background:#666"></div>
<svg class="abs" style="left:42.50px;top:274.30px" width="8.2" height="8.2" viewBox="0 0 10 10"><circle cx="5" cy="5" r="5" fill="#128a3c"/><path d="M2.6 5.1L4.3 6.8L7.4 3.5" stroke="#fff" stroke-width="1.5" fill="none"/></svg>
<svg class="abs" style="left:42.50px;top:294.10px" width="8.2" height="8.2" viewBox="0 0 10 10"><circle cx="5" cy="5" r="5" fill="#128a3c"/><path d="M2.6 5.1L4.3 6.8L7.4 3.5" stroke="#fff" stroke-width="1.5" fill="none"/></svg>
<div class="abs" style="left:25.5px;top:314.2px;width:7.6px;height:7.8px;border:0.8px solid #e6e6e6;background:#fff;border-radius:1px"></div>
<div class="abs" style="left:27.8px;top:317.6px;width:3px;height:1px;background:#666"></div>
<div class="abs" style="left:28.8px;top:316.6px;width:1px;height:3px;background:#666"></div>
<div class="abs" style="left:25.5px;top:334.0px;width:7.6px;height:7.8px;border:0.8px solid #e6e6e6;background:#fff;border-radius:1px"></div>
<div class="abs" style="left:27.8px;top:337.4px;width:3px;height:1px;background:#666"></div>
<div class="abs" style="left:28.8px;top:336.4px;width:1px;height:3px;background:#666"></div>
<svg class="abs" style="left:41.10px;top:331.90px" width="11" height="12" viewBox="0 0 11 12"><path d="M4.2 1.6L7.2 .6L9.6 1.4V7.8L7 9V11L3.2 11.4L.8 10.2V6.2L4.2 5Z" fill="#fff" stroke="#222" stroke-width=".8" stroke-linejoin="round"/><path d="M4.2 1.6L6.6 2.6V9M6.6 2.6L9.6 1.4M.8 6.2L3.4 7.2V11.2M3.4 7.2L6.6 6M4.2 5L6.6 6" stroke="#222" stroke-width=".7" fill="none"/></svg>
<svg class="abs" style="left:49.00px;top:340.40px" width="6" height="6" viewBox="0 0 10 10"><circle cx="5" cy="5" r="5" fill="#128a3c"/><path d="M2.6 5.1L4.3 6.8L7.4 3.5" stroke="#fff" stroke-width="1.5" fill="none"/></svg>
<div class="abs" style="left:25.5px;top:353.8px;width:7.6px;height:7.8px;border:0.8px solid #e6e6e6;background:#fff;border-radius:1px"></div>
<div class="abs" style="left:27.8px;top:357.2px;width:3px;height:1px;background:#666"></div>
<div class="abs" style="left:167.0px;top:353.0px;width:10px;height:10px;border:0.8px solid #dadada;border-radius:50%;background:#fff"></div>
<div class="abs" style="left:169.9px;top:357.5px;width:4.2px;height:1px;background:#555"></div>
<div class="abs" style="left:171.5px;top:355.9px;width:1px;height:4.2px;background:#555"></div>
<div class="abs" style="left:42.4px;top:373.6px;width:7.6px;height:7.8px;border:0.8px solid #e6e6e6;background:#fff;border-radius:1px"></div>
<div class="abs" style="left:44.7px;top:377.0px;width:3px;height:1px;background:#666"></div>
<svg class="abs" style="left:57.50px;top:371.30px" width="12" height="12" viewBox="0 0 12 12"><g transform="translate(6 6)"><g fill="#128a3c"><rect x="-1.3" y="-5.8" width="2.6" height="3.2" rx=".5" transform="rotate(0)"/><rect x="-1.3" y="-5.8" width="2.6" height="3.2" rx=".5" transform="rotate(45)"/><rect x="-1.3" y="-5.8" width="2.6" height="3.2" rx=".5" transform="rotate(90)"/><rect x="-1.3" y="-5.8" width="2.6" height="3.2" rx=".5" transform="rotate(135)"/><rect x="-1.3" y="-5.8" width="2.6" height="3.2" rx=".5" transform="rotate(180)"/><rect x="-1.3" y="-5.8" width="2.6" height="3.2" rx=".5" transform="rotate(225)"/><rect x="-1.3" y="-5.8" width="2.6" height="3.2" rx=".5" transform="rotate(270)"/><rect x="-1.3" y="-5.8" width="2.6" height="3.2" rx=".5" transform="rotate(315)"/></g><circle r="3.9" fill="#128a3c"/><circle r="1.9" fill="#fff"/></g></svg>
<svg class="abs" style="left:65.80px;top:379.70px" width="6" height="6" viewBox="0 0 10 10"><circle cx="5" cy="5" r="5" fill="#128a3c"/><path d="M2.6 5.1L4.3 6.8L7.4 3.5" stroke="#fff" stroke-width="1.5" fill="none"/></svg>
<div class="abs" style="left:59.6px;top:393.4px;width:7.6px;height:7.8px;border:0.8px solid #e6e6e6;background:#fff;border-radius:1px"></div>
<div class="abs" style="left:61.9px;top:396.8px;width:3px;height:1px;background:#666"></div>
<div class="abs" style="left:62.9px;top:395.8px;width:1px;height:3px;background:#666"></div>
<div class="abs" style="left:59.6px;top:413.2px;width:7.6px;height:7.8px;border:0.8px solid #e6e6e6;background:#fff;border-radius:1px"></div>
<div class="abs" style="left:61.9px;top:416.6px;width:3px;height:1px;background:#666"></div>
<div class="abs" style="left:62.9px;top:415.6px;width:1px;height:3px;background:#666"></div>
<div class="abs" style="left:59.6px;top:472.6px;width:7.6px;height:7.8px;border:0.8px solid #e6e6e6;background:#fff;border-radius:1px"></div>
<div class="abs" style="left:61.9px;top:476.0px;width:3px;height:1px;background:#666"></div>
<div class="abs" style="left:62.9px;top:475.0px;width:1px;height:3px;background:#666"></div>
<div class="abs" style="left:59.6px;top:492.4px;width:7.6px;height:7.8px;border:0.8px solid #e6e6e6;background:#fff;border-radius:1px"></div>
<div class="abs" style="left:61.9px;top:495.8px;width:3px;height:1px;background:#666"></div>
<div class="abs" style="left:62.9px;top:494.8px;width:1px;height:3px;background:#666"></div>
<div class="abs" style="left:167.0px;top:7.7px;width:10px;height:10px;border:0.8px solid #dadada;border-radius:50%;background:#fff"></div>
<div class="abs" style="left:169.9px;top:12.2px;width:4.2px;height:1px;background:#555"></div>
<div class="abs" style="left:171.5px;top:10.6px;width:1px;height:4.2px;background:#555"></div>
<div class="abs" style="left:167.0px;top:32.9px;width:10px;height:10px;border:0.8px solid #dadada;border-radius:50%;background:#fff"></div>
<div class="abs" style="left:169.9px;top:37.4px;width:4.2px;height:1px;background:#555"></div>
<div class="abs" style="left:171.5px;top:35.8px;width:1px;height:4.2px;background:#555"></div>
<svg class="abs" style="left:9.8px;top:9.0px" width="6" height="8" viewBox="0 0 6 8"><path d="M1.2 1L4.6 4L1.2 7" stroke="#666" stroke-width="1" fill="none"/></svg>
<svg class="abs" style="left:8.4px;top:35.5px" width="8" height="6" viewBox="0 0 8 6"><path d="M1 1.2L4 4.6L7 1.2" stroke="#666" stroke-width="1" fill="none"/></svg>
<svg class="abs" style="left:24.50px;top:7.80px" width="10" height="10" viewBox="0 0 10 10"><path d="M3.2 1.2L5.2 .4L7.2 1.2V4L5.2 4.8L3.2 4Z" fill="#c9c9c9" stroke="#9a9a9a" stroke-width=".5"/><path d="M.6 5.4L2.8 4.6L5 5.4V8.4L2.8 9.3L.6 8.4Z" fill="#8e8e8e" stroke="#9a9a9a" stroke-width=".5"/><path d="M5 5.4L7.2 4.6L9.4 5.4V8.4L7.2 9.3L5 8.4Z" fill="#b5b5b5" stroke="#9a9a9a" stroke-width=".5"/></svg>
<svg class="abs" style="left:24.10px;top:32.20px" width="11" height="11" viewBox="0 0 10 10"><path d="M3.2 1.2L5.2 .4L7.2 1.2V4L5.2 4.8L3.2 4Z" fill="#f2c230"/><path d="M3.2 1.2L5.2 2V4.8L3.2 4Z" fill="#e0a818"/><path d="M.6 5.4L2.8 4.6L5 5.4V8.4L2.8 9.3L.6 8.4Z" fill="#f2c230"/><path d="M.6 5.4L2.8 6.2V9.3L.6 8.4Z" fill="#1f78c8"/><path d="M5 5.4L7.2 4.6L9.4 5.4V8.4L7.2 9.3L5 8.4Z" fill="#f2c230"/><path d="M5 5.4L7.2 6.2V9.3L5 8.4Z" fill="#1f78c8"/></svg>
<span class="t" style="left:39.60px;top:57.32px;font-size:9.30px;letter-spacing:-0.142px;color:#3a3a3a;">Convective Heat Transfer</span>
<span class="t" style="left:56.70px;top:77.12px;font-size:9.30px;letter-spacing:-0.041px;color:#3a3a3a;">Geometry</span>
<span class="t" style="left:56.70px;top:96.92px;font-size:9.30px;letter-spacing:0.034px;color:#3a3a3a;">Model</span>
<span class="t" style="left:39.70px;top:116.72px;font-size:9.30px;letter-spacing:0.087px;color:#3a3a3a;">Materials</span>
<span class="t" style="left:73.70px;top:136.52px;font-size:9.30px;letter-spacing:0.208px;color:#3a3a3a;">Air</span>
<span class="t" style="left:56.70px;top:156.32px;font-size:9.30px;letter-spacing:0.047px;color:#3a3a3a;">Initial conditions</span>
<span class="t" style="left:39.70px;top:176.12px;font-size:9.30px;letter-spacing:-0.066px;color:#3a3a3a;">Boundary conditions</span>
<span class="t" style="left:73.70px;top:195.92px;font-size:9.30px;letter-spacing:0.058px;color:#3a3a3a;">Velocity inlet</span>
<span class="t" style="left:73.70px;top:215.72px;font-size:9.30px;letter-spacing:0.095px;color:#3a3a3a;">Duct outlet</span>
<span class="t" style="left:73.70px;top:235.52px;font-size:9.30px;letter-spacing:-0.456px;color:#3a3a3a;">Seats</span>
<span class="t" style="left:39.70px;top:255.32px;font-size:9.30px;letter-spacing:-0.186px;color:#3a3a3a;">Advanced concepts</span>
<span class="t" style="left:56.70px;top:275.12px;font-size:9.30px;letter-spacing:-0.033px;color:#3a3a3a;">Numerics</span>
<span class="t" style="left:56.70px;top:294.92px;font-size:9.30px;letter-spacing:-0.023px;color:#3a3a3a;">Simulation control</span>
<span class="t" style="left:39.70px;top:314.72px;font-size:9.30px;letter-spacing:-0.025px;color:#3a3a3a;">Result control</span>
<span class="t" style="left:56.70px;top:334.52px;font-size:9.30px;letter-spacing:-0.184px;color:#3a3a3a;">Mesh</span>
<span class="t" style="left:39.70px;top:354.32px;font-size:9.30px;letter-spacing:-0.180px;color:#3a3a3a;">Simulation Runs</span>
<span class="t" style="left:73.90px;top:374.12px;font-size:9.30px;letter-spacing:-0.463px;color:#3a3a3a;">Run 1</span>
<span class="t" style="left:73.70px;top:393.92px;font-size:9.30px;letter-spacing:-0.074px;color:#3a3a3a;">Settings</span>
<span class="t" style="left:73.70px;top:413.72px;font-size:9.30px;letter-spacing:-0.149px;color:#3a3a3a;">Convergence plots</span>
<span class="t" style="left:73.70px;top:433.52px;font-size:9.30px;letter-spacing:-0.166px;color:#3a3a3a;">Solution Fields</span>
<span class="t" style="left:73.70px;top:453.32px;font-size:9.30px;letter-spacing:-0.245px;color:#3a3a3a;">Solver Log</span>
<span class="t" style="left:73.70px;top:473.12px;font-size:9.30px;letter-spacing:-0.109px;color:#3a3a3a;">Simulation Job Info</span>
<span class="t" style="left:73.70px;top:492.92px;font-size:9.30px;letter-spacing:-0.145px;color:#3a3a3a;">Meshing Job Info</span>
<span class="t" style="left:39.60px;top:9.09px;font-size:9.30px;letter-spacing:-0.460px;color:#333;font-weight:bold;">GEOMETRIES (2)</span>
<span class="t" style="left:39.60px;top:34.29px;font-size:9.30px;letter-spacing:-0.169px;color:#333;font-weight:bold;">SIMULATIONS</span>
</div>
<div id="tsb"><div class="abs" style="left:0.5px;top:6.5px;width:3px;height:456px;background:#dadada;border-radius:1px"></div><svg class="abs" style="left:0.4px;top:1.6px" width="3" height="3" viewBox="0 0 3 3"><path d="M0 2.6L1.5 .4L3 2.6Z" fill="#bbb"/></svg><svg class="abs" style="left:0.4px;top:494px" width="3" height="3" viewBox="0 0 3 3"><path d="M0 .4L1.5 2.6L3 .4Z" fill="#bbb"/></svg></div>
<div class="abs" style="left:197.2px;top:303.3px;width:0.8px;height:11.4px;background:#e0e0e0"></div><div class="abs" style="left:200px;top:303.3px;width:0.8px;height:11.4px;background:#e0e0e0"></div>
<div id="job"><span class="t" style="left:7px;top:8.3px;font-size:10.2px;font-weight:bold;color:#333;letter-spacing:-0.33px">Job status</span></div>
<div id="filters">
<div class="abs" style="left:176.3px;top:5.0px;width:23.0px;height:22.0px;border:0.8px solid #dcdcdc;border-radius:2px;background:#fff"></div>
<svg class="abs" style="left:184.3px;top:12.5px" width="7" height="7" viewBox="0 0 7 7"><path d="M.8 .8L6.2 6.2M6.2 .8L.8 6.2" stroke="#666" stroke-width=".9"/></svg>
<div class="abs" style="left:0.0px;top:31.1px;width:205.3px;height:0.8px;background:#ececec"></div>
<svg class="abs" style="left:12.3px;top:42.4px" width="5" height="7" viewBox="0 0 5 7"><path d="M1 1L3.8 3.5L1 6" stroke="#555" stroke-width="1" fill="none"/></svg>
<svg class="abs" style="left:18.8px;top:40.9px" width="11" height="10" viewBox="0 0 11 10"><path d="M4.6 1L8.6 5L5 8.6L1 4.6Z" fill="#cfe5f2" stroke="#2c86b8" stroke-width=".9" stroke-linejoin="round"/><path d="M1.4 4.9H8.3L5 8.3Z" fill="#2c86b8"/><path d="M3 .6L5.6 3.2" stroke="#2c86b8" stroke-width=".8"/><circle cx="9.6" cy="8.2" r="1.1" fill="#2c86b8"/></svg>
<div class="abs" style="left:174.1px;top:42.5px;width:12.5px;height:6.8px;background:#d6e7f1;border-radius:3.4px"></div>
<div class="abs" style="left:178.7px;top:40.0px;width:11.8px;height:11.8px;border-radius:50%;background:#0d72aa"></div>
<div class="abs" style="left:0.0px;top:60.4px;width:199.6px;height:27.5px;background:#dbeaf4"></div>
<svg class="abs" style="left:11.0px;top:71.8px" width="7" height="5" viewBox="0 0 7 5"><path d="M1 1L3.5 3.8L6 1" stroke="#555" stroke-width="1" fill="none"/></svg>
<svg class="abs" style="left:19.8px;top:68.6px" width="9" height="11" viewBox="0 0 9 11"><path d="M1 2.6C1 1.2 8 1.2 8 2.6V8.4C8 9.8 1 9.8 1 8.4Z" fill="#e4f0f7" stroke="#8dbedb" stroke-width=".6"/><path d="M1 2.6C1 1.4 4.5 1.5 4.5 1.5V9.5C4.5 9.5 1 9.6 1 8.4Z" fill="#6aabd0"/><path d="M4.5 .2V10.8" stroke="#8fbfdc" stroke-width=".7" stroke-dasharray="1 .6"/></svg>
<svg class="abs" style="left:157.0px;top:69.4px" width="8" height="9" viewBox="0 0 8 9"><path d="M.8 2h6.4M2.8 2V.9h2.4V2M1.5 2.2l.4 6h4.2l.4-6" fill="#f2f2f2" stroke="#8c8c8c" stroke-width=".7" stroke-linejoin="round"/><path d="M3.2 3.6v3.4M4.8 3.6v3.4" stroke="#8c8c8c" stroke-width=".5"/></svg>
<div class="abs" style="left:174.8px;top:70.7px;width:12.5px;height:6.8px;background:#d6e7f1;border-radius:3.4px"></div>
<div class="abs" style="left:179.4px;top:68.2px;width:11.8px;height:11.8px;border-radius:50%;background:#0d72aa"></div>
<svg class="abs" style="left:7.7px;top:107.4px" width="7" height="5" viewBox="0 0 7 5"><path d="M1 1L3.5 3.8L6 1" stroke="#555" stroke-width="1" fill="none"/></svg>
<div class="abs" style="left:96.0px;top:108.5px;width:69.0px;height:3.0px;background:#d8d8d8;border-radius:1.5px"></div>
<div class="abs" style="left:96.0px;top:108.5px;width:22.3px;height:3.0px;background:#0d72aa;border-radius:1.5px"></div>
<div class="abs" style="left:112.8px;top:104.5px;width:11px;height:11px;border-radius:50%;background:#fff;border:0.5px solid #d6d6d6;box-shadow:0 0.6px 1.6px rgba(0,0,0,.22)"></div>
<div class="abs" style="left:171.4px;top:100.5px;width:19.2px;height:19.2px;border:0.8px solid #e4e4e4;border-radius:2px;background:#fff"></div>
<svg class="abs" style="left:177.0px;top:106.1px" width="8" height="8" viewBox="0 0 8 8"><circle cx="4" cy="4" r="3.5" fill="none" stroke="#8a8a8a" stroke-width=".7"/><circle cx="4" cy="4" r="1.5" fill="none" stroke="#8a8a8a" stroke-width=".9"/></svg>
<div class="abs" style="left:30.0px;top:136.5px;width:97.5px;height:3.0px;background:#d8d8d8;border-radius:1.5px"></div>
<div class="abs" style="left:30.0px;top:136.5px;width:52.0px;height:3.0px;background:#0d72aa;border-radius:1.5px"></div>
<div class="abs" style="left:76.5px;top:132.5px;width:11px;height:11px;border-radius:50%;background:#fff;border:0.5px solid #d6d6d6;box-shadow:0 0.6px 1.6px rgba(0,0,0,.22)"></div>
<div class="abs" style="left:131.0px;top:148.5px;width:49.5px;height:1.0px;background:#e9e9e9"></div>
<div class="abs" style="left:30.0px;top:162.5px;width:97.5px;height:3.0px;background:#d8d8d8;border-radius:1.5px"></div>
<div class="abs" style="left:30.0px;top:162.5px;width:20.3px;height:3.0px;background:#0d72aa;border-radius:1.5px"></div>
<div class="abs" style="left:44.8px;top:158.5px;width:11px;height:11px;border-radius:50%;background:#fff;border:0.5px solid #d6d6d6;box-shadow:0 0.6px 1.6px rgba(0,0,0,.22)"></div>
<div class="abs" style="left:131.0px;top:174.5px;width:49.5px;height:1.0px;background:#e9e9e9"></div>
<div class="abs" style="left:30.0px;top:188.5px;width:97.5px;height:3.0px;background:#d8d8d8;border-radius:1.5px"></div>
<div class="abs" style="left:30.0px;top:188.5px;width:49.0px;height:3.0px;background:#0d72aa;border-radius:1.5px"></div>
<div class="abs" style="left:73.5px;top:184.5px;width:11px;height:11px;border-radius:50%;background:#fff;border:0.5px solid #d6d6d6;box-shadow:0 0.6px 1.6px rgba(0,0,0,.22)"></div>
<div class="abs" style="left:131.0px;top:200.5px;width:49.5px;height:1.0px;background:#e9e9e9"></div>
<svg class="abs" style="left:7.7px;top:222.0px" width="7" height="5" viewBox="0 0 7 5"><path d="M1 1L3.5 3.8L6 1" stroke="#555" stroke-width="1" fill="none"/></svg>
<div class="abs" style="left:108.0px;top:215.7px;width:57.3px;height:18.2px;border:0.8px solid #e4e4e4;border-radius:2px;background:#fff"></div>
<div class="abs" style="left:126.7px;top:215.7px;width:0.8px;height:18.2px;background:#e8e8e8"></div>
<div class="abs" style="left:145.8px;top:215.7px;width:0.8px;height:18.2px;background:#e8e8e8"></div>
<div class="abs" style="left:171.8px;top:215.7px;width:19.6px;height:18.2px;border:0.8px solid #e4e4e4;border-radius:2px;background:#fff"></div>
<svg class="abs" style="left:177.6px;top:220.8px" width="8" height="8" viewBox="0 0 8 8"><path d="M1 2.6h6M5.4 1L7 2.6L5.4 4.2M7 5.4H1M2.6 3.8L1 5.4L2.6 7" stroke="#444" stroke-width=".9" fill="none"/></svg>
<div class="abs" style="left:30.0px;top:251.5px;width:122.3px;height:3.0px;background:#d8d8d8;border-radius:1.5px"></div>
<div class="abs" style="left:30.0px;top:251.5px;width:45.5px;height:3.0px;background:#0d72aa;border-radius:1.5px"></div>
<div class="abs" style="left:70.0px;top:247.5px;width:11px;height:11px;border-radius:50%;background:#fff;border:0.5px solid #d6d6d6;box-shadow:0 0.6px 1.6px rgba(0,0,0,.22)"></div>
<div class="abs" style="left:156.0px;top:263.5px;width:35.4px;height:1.0px;background:#e9e9e9"></div>
<div class="abs" style="left:30.0px;top:277.5px;width:122.3px;height:3.0px;background:#d8d8d8;border-radius:1.5px"></div>
<div class="abs" style="left:30.0px;top:277.5px;width:117.0px;height:3.0px;background:#0d72aa;border-radius:1.5px"></div>
<div class="abs" style="left:141.5px;top:273.5px;width:11px;height:11px;border-radius:50%;background:#fff;border:0.5px solid #d6d6d6;box-shadow:0 0.6px 1.6px rgba(0,0,0,.22)"></div>
<div class="abs" style="left:156.0px;top:289.5px;width:35.4px;height:1.0px;background:#e9e9e9"></div>
<div class="abs" style="left:30.0px;top:302.5px;width:122.3px;height:3.0px;background:#d8d8d8;border-radius:1.5px"></div>
<div class="abs" style="left:30.0px;top:302.5px;width:61.5px;height:3.0px;background:#0d72aa;border-radius:1.5px"></div>
<div class="abs" style="left:86.0px;top:298.5px;width:11px;height:11px;border-radius:50%;background:#fff;border:0.5px solid #d6d6d6;box-shadow:0 0.6px 1.6px rgba(0,0,0,.22)"></div>
<div class="abs" style="left:156.0px;top:314.5px;width:35.4px;height:1.0px;background:#e9e9e9"></div>
<div class="abs" style="left:89.4px;top:324.2px;width:106.4px;height:20.9px;border:1.7px solid #5078dc;border-radius:1px;background:#fff"></div>
<svg class="abs" style="left:182.0px;top:332.3px" width="7" height="5" viewBox="0 0 7 5"><path d="M1 1L3.5 3.8L6 1" stroke="#555" stroke-width="1" fill="none"/></svg>
<svg class="abs" style="left:8.7px;top:361.2px" width="5" height="7" viewBox="0 0 5 7"><path d="M1 1L3.8 3.5L1 6" stroke="#555" stroke-width="1" fill="none"/></svg>
<div class="abs" style="left:177.6px;top:361.1px;width:13.0px;height:6.8px;background:#e4e4e4;border-radius:3.4px"></div>
<div class="abs" style="left:174.1px;top:359.0px;width:11px;height:11px;border-radius:50%;background:#fff;border:0.8px solid #c8c8c8"></div>
<div class="abs" style="left:96.3px;top:393.5px;width:51.7px;height:3.0px;background:#d8d8d8;border-radius:1.5px"></div>
<div class="abs" style="left:96.3px;top:393.5px;width:50.7px;height:3.0px;background:#0d72aa;border-radius:1.5px"></div>
<div class="abs" style="left:141.5px;top:389.5px;width:11px;height:11px;border-radius:50%;background:#fff;border:0.5px solid #d6d6d6;box-shadow:0 0.6px 1.6px rgba(0,0,0,.22)"></div>
<div class="abs" style="left:156.0px;top:405.5px;width:35.4px;height:1.0px;background:#e9e9e9"></div>
<div class="abs" style="left:174.8px;top:417.6px;width:12.5px;height:6.8px;background:#d6e7f1;border-radius:3.4px"></div>
<div class="abs" style="left:179.4px;top:415.1px;width:11.8px;height:11.8px;border-radius:50%;background:#0d72aa"></div>
<div class="abs" style="left:177.6px;top:443.5px;width:13.0px;height:6.8px;background:#e4e4e4;border-radius:3.4px"></div>
<div class="abs" style="left:174.1px;top:441.4px;width:11px;height:11px;border-radius:50%;background:#fff;border:0.8px solid #c8c8c8"></div>
<div class="abs" style="left:200.2px;top:37.5px;width:2.8px;height:341.0px;background:#dbdbdb;border-radius:1px"></div>
<svg class="abs" style="left:200.0px;top:33.1px" width="3" height="3" viewBox="0 0 3 3"><path d="M0 2.6L1.5 .4L3 2.6Z" fill="#bbb"/></svg>
<svg class="abs" style="left:200.0px;top:440.5px" width="3" height="3" viewBox="0 0 3 3"><path d="M0 .4L1.5 2.6L3 .4Z" fill="#bbb"/></svg>
<span class="t" style="left:14.30px;top:10.65px;font-size:11.20px;letter-spacing:-0.511px;color:#333;font-weight:bold;">Filters</span>
<span class="t" style="left:35.50px;top:41.59px;font-size:9.80px;letter-spacing:-0.310px;color:#333;font-weight:bold;">Parts Color</span>
<span class="t" style="left:35.50px;top:69.79px;font-size:9.80px;letter-spacing:-0.254px;color:#333;font-weight:bold;">Cutting Plane 1</span>
<span class="t" style="left:20.40px;top:105.18px;font-size:9.40px;letter-spacing:-0.248px;color:#333;font-weight:bold;">Position</span>
<span class="t" style="left:18.60px;top:134.69px;font-size:9.30px;letter-spacing:-0.603px;color:#333;">X</span>
<span class="t" style="left:134.30px;top:134.89px;font-size:9.30px;letter-spacing:-0.153px;color:#333;">8.577</span>
<span class="t" style="left:183.60px;top:134.62px;font-size:9.30px;letter-spacing:-0.550px;color:#333;">m</span>
<span class="t" style="left:18.60px;top:160.29px;font-size:9.30px;letter-spacing:-0.603px;color:#333;">Y</span>
<span class="t" style="left:134.30px;top:160.49px;font-size:9.30px;letter-spacing:-0.153px;color:#333;">1.961</span>
<span class="t" style="left:183.60px;top:160.22px;font-size:9.30px;letter-spacing:-0.550px;color:#333;">m</span>
<span class="t" style="left:18.60px;top:185.89px;font-size:9.30px;letter-spacing:-0.088px;color:#333;">Z</span>
<span class="t" style="left:134.30px;top:186.09px;font-size:9.30px;letter-spacing:-0.152px;color:#333;">5.31</span>
<span class="t" style="left:183.60px;top:185.82px;font-size:9.30px;letter-spacing:-0.550px;color:#333;">m</span>
<span class="t" style="left:20.40px;top:219.48px;font-size:9.40px;letter-spacing:-0.092px;color:#333;font-weight:bold;">Orientation</span>
<span class="t" style="left:114.60px;top:221.37px;font-size:8.60px;letter-spacing:-0.334px;color:#333;">X</span>
<span class="t" style="left:133.80px;top:221.37px;font-size:8.60px;letter-spacing:-0.334px;color:#333;">Y</span>
<span class="t" style="left:152.90px;top:221.37px;font-size:8.60px;letter-spacing:0.150px;color:#333;">Z</span>
<span class="t" style="left:18.60px;top:248.99px;font-size:9.30px;letter-spacing:-0.603px;color:#333;">X</span>
<span class="t" style="left:158.30px;top:249.19px;font-size:9.30px;letter-spacing:-0.141px;color:#333;">-0.27</span>
<span class="t" style="left:18.60px;top:274.99px;font-size:9.30px;letter-spacing:-0.603px;color:#333;">Y</span>
<span class="t" style="left:158.30px;top:275.19px;font-size:9.30px;letter-spacing:-1.672px;color:#333;">1</span>
<span class="t" style="left:18.60px;top:300.19px;font-size:9.30px;letter-spacing:-0.088px;color:#333;">Z</span>
<span class="t" style="left:158.30px;top:300.39px;font-size:9.30px;letter-spacing:-0.172px;color:#333;">0</span>
<span class="t" style="left:9.00px;top:330.12px;font-size:9.30px;letter-spacing:0.047px;color:#333;">Coloring</span>
<span class="t" style="left:99.20px;top:330.22px;font-size:9.30px;letter-spacing:-0.108px;color:#333;">Predicted Percent...</span>
<span class="t" style="left:20.40px;top:359.48px;font-size:9.60px;letter-spacing:-0.453px;color:#333;font-weight:bold;">Vectors</span>
<span class="t" style="left:9.00px;top:390.82px;font-size:9.30px;letter-spacing:0.138px;color:#333;">Opacity</span>
<span class="t" style="left:159.30px;top:391.49px;font-size:9.30px;letter-spacing:-1.672px;color:#333;">1</span>
<span class="t" style="left:9.00px;top:416.82px;font-size:9.30px;letter-spacing:-0.142px;color:#333;">Clip model</span>
<span class="t" style="left:9.00px;top:442.82px;font-size:9.30px;letter-spacing:-0.509px;color:#333;">Show mesh</span>
</div>
</body>
</html>
